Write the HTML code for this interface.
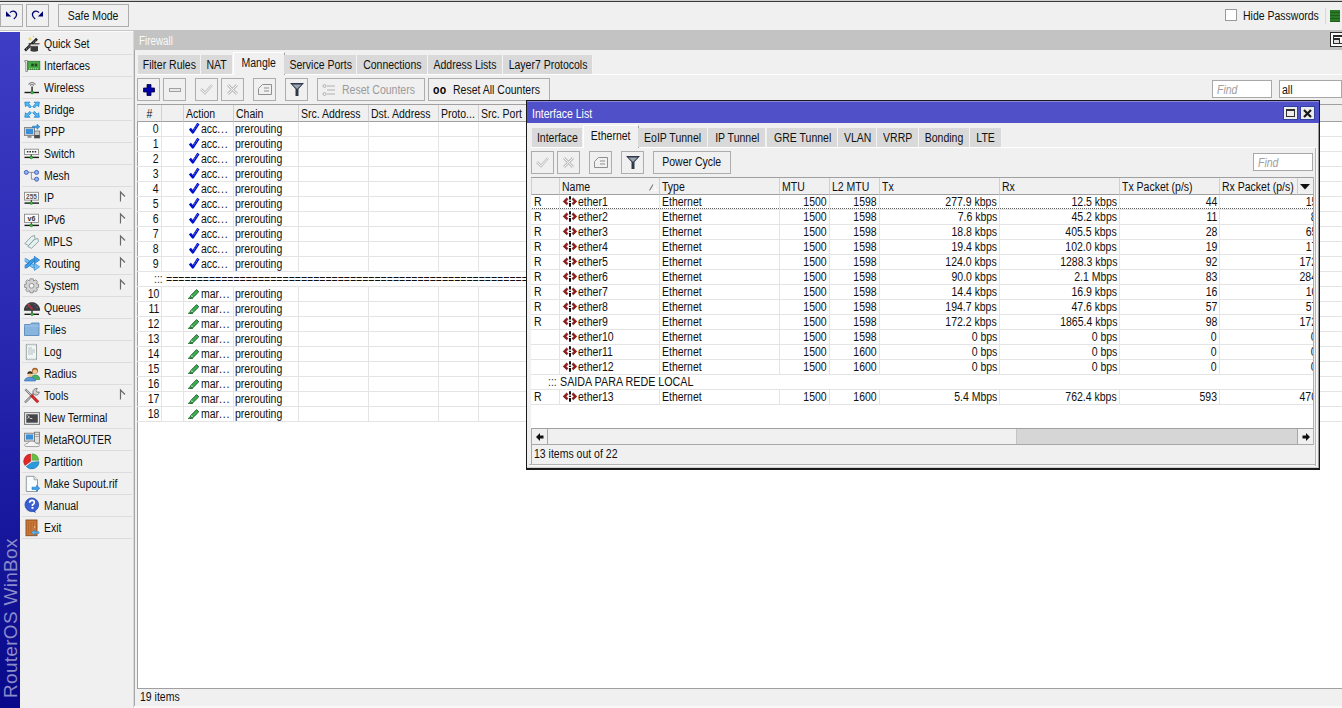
<!DOCTYPE html><html><head><meta charset="utf-8"><style>
*{margin:0;padding:0;box-sizing:border-box}
html,body{width:1342px;height:708px;overflow:hidden}
body{background:#f0f0f0;font-family:"Liberation Sans",sans-serif;font-size:12px;color:#000;position:relative}
.sl,.sr,.sc{display:inline-block;transform:scaleX(var(--sx,0.875))}
.sl{transform-origin:0 50%}.sr{transform-origin:100% 50%}.sc{transform-origin:50% 50%}
.a{position:absolute}
.t{position:absolute;white-space:nowrap}
.b{position:absolute;border:1px solid #adadad;background:#f0f0f0}
.tab{position:absolute;background:#dcdcdc;border-right:1px solid #f8f8f8}
.hc{position:absolute;border-right:1px solid #c8c8c8;border-bottom:1px solid #a0a0a0;background:#f0f0f0;padding-left:3px;line-height:16px;height:16px}
svg{position:absolute;overflow:visible}
</style></head><body>
<div class="a" style="left:0px;top:0px;width:1342px;height:1px;background:#d0d0d0"></div>
<div class="a" style="left:0px;top:1px;width:1342px;height:1px;background:#3a3a3a"></div>
<div class="a" style="left:0px;top:30px;width:134px;height:1px;background:#c8c8c8"></div>
<div class="a" style="left:0px;top:31px;width:134px;height:1px;background:#fafafa"></div>
<div class="b" style="left:0px;top:4px;width:23px;height:23px;"></div>
<div class="b" style="left:26px;top:4px;width:23px;height:23px;"></div>
<div class="b" style="left:58px;top:4px;width:71px;height:23px;"></div>
<div class="t" style="left:58px;top:6px;height:21px;line-height:21px;width:71px;text-align:center;color:#111"><span class="sc">Safe Mode</span></div>
<svg style="left:6px;top:10px" width="12" height="10"><path d="M4 2.6 Q5.5 1 7.5 1.2 Q10.6 1.8 10.6 4.8 Q10.4 7.2 7.8 9" stroke="#000070" stroke-width="1.3" fill="none"/><path d="M0 1.2 L5.2 6.6 H0 Z" fill="#000070"/></svg>
<svg style="left:31px;top:10px" width="12" height="10"><path d="M8 2.6 Q6.5 1 4.5 1.2 Q1.4 1.8 1.4 4.8 Q1.6 7.2 4.2 9" stroke="#000070" stroke-width="1.3" fill="none"/><path d="M12 1.2 L6.8 6.6 H12 Z" fill="#000070"/></svg>
<div class="a" style="left:1225px;top:9px;width:12px;height:12px;background:#fff;border:1px solid #9a9a9a"></div>
<div class="t" style="left:1243px;top:9px;height:15px;line-height:15px;color:#111"><span class="sl">Hide Passwords</span></div>
<div class="a" style="left:1325px;top:8px;width:1px;height:16px;background:#d8d8d8"></div>
<div class="a" style="left:1330px;top:10px;width:10px;height:12px;background:repeating-linear-gradient(#2a7a2a 0 2px,#1c601c 2px 3px)"></div>
<div class="a" style="left:0px;top:32px;width:20px;height:676px;background:linear-gradient(#3d3dc6,#2a2ab4 40%,#08088a)"></div>
<div class="t" style="left:1px;top:698px;transform-origin:0 0;transform:rotate(-90deg);font-size:19px;letter-spacing:0.3px;color:#8c8cc8;line-height:19px">RouterOS WinBox</div>
<div class="t" style="left:44px;top:36px;height:16px;line-height:16px;color:#111"><span class="sl">Quick Set</span></div>
<div class="a" style="left:22px;top:54px;width:110px;height:1px;background:#dcdcdc"></div>
<svg style="left:24px;top:32px" width="16" height="22" viewBox="0 0 16 22"><path d="M1 18.5 L13 6.8" stroke="#1a1a1a" stroke-width="2.6"/><path d="M2 17.5 L12 7.8" stroke="#e8e8e8" stroke-width="0.8" stroke-dasharray="1.2 1.2"/>
<path d="M6.5 12 H14 V19 Q10.2 20.3 6.5 19 Z" fill="#3a3a3a"/><rect x="6.5" y="12" width="7.5" height="2.2" fill="#d8d8d8"/><path d="M4.5 11.8 H15.5" stroke="#202020" stroke-width="1"/>
<path d="M6 4.5 L6.6 6.4 L8.5 7 L6.6 7.6 L6 9.5 L5.4 7.6 L3.5 7 L5.4 6.4 Z" fill="#e8d040"/><circle cx="9.5" cy="4.5" r="0.7" fill="#d0c050"/><circle cx="12" cy="9.5" r="0.6" fill="#c0c060"/></svg>
<div class="t" style="left:44px;top:58px;height:16px;line-height:16px;color:#111"><span class="sl">Interfaces</span></div>
<div class="a" style="left:22px;top:76px;width:110px;height:1px;background:#dcdcdc"></div>
<svg style="left:24px;top:54px" width="16" height="22" viewBox="0 0 16 22"><path d="M0.8 6.5 H3.5 V17.5 H1.8 V8 H0.8 Z" fill="#f0f0f0" stroke="#8a8a8a" stroke-width="0.9"/>
<rect x="3.8" y="7.3" width="12" height="8.3" fill="#4caa4c" stroke="#2a7a2a" stroke-width="0.8"/><rect x="7.2" y="9.6" width="2.6" height="2.8" fill="#1e4a1e"/><rect x="10.7" y="9.6" width="2.6" height="2.8" fill="#1e4a1e"/>
<path d="M5 14.8 H15" stroke="#d8e070" stroke-width="1" stroke-dasharray="1 1"/></svg>
<div class="t" style="left:44px;top:80px;height:16px;line-height:16px;color:#111"><span class="sl">Wireless</span></div>
<div class="a" style="left:22px;top:98px;width:110px;height:1px;background:#dcdcdc"></div>
<svg style="left:24px;top:76px" width="16" height="22" viewBox="0 0 16 22"><path d="M4.5 8.5 Q8 4.5 11.5 8.5" stroke="#7a7a7a" stroke-width="1.1" fill="none"/><path d="M6 9.5 Q8 7.5 10 9.5" stroke="#7a7a7a" stroke-width="1.1" fill="none"/>
<rect x="7.2" y="10.5" width="1.8" height="6" fill="#505050"/><path d="M0.5 16.5 H15" stroke="#1a1a1a" stroke-width="1.4"/><circle cx="8.1" cy="16.5" r="1.4" fill="#3cc040" stroke="#1a6a1a" stroke-width="0.5"/></svg>
<div class="t" style="left:44px;top:102px;height:16px;line-height:16px;color:#111"><span class="sl">Bridge</span></div>
<div class="a" style="left:22px;top:120px;width:110px;height:1px;background:#dcdcdc"></div>
<svg style="left:24px;top:98px" width="16" height="22" viewBox="0 0 16 22"><g fill="#55b8f0" stroke="#1a80d0" stroke-width="0.8"><path d="M0.8 4.2 H6 L4.5 5.7 L7.3 8.5 L5.8 10 L3 7.2 L1.5 8.7 Z"/><path d="M15.3 4.2 H10.1 L11.6 5.7 L8.8 8.5 L10.3 10 L13.1 7.2 L14.6 8.7 Z"/>
<path d="M0.8 19.2 H6 L4.5 17.7 L7.3 14.9 L5.8 13.4 L3 16.2 L1.5 14.7 Z"/><path d="M15.3 19.2 H10.1 L11.6 17.7 L8.8 14.9 L10.3 13.4 L13.1 16.2 L14.6 14.7 Z"/></g></svg>
<div class="t" style="left:44px;top:124px;height:16px;line-height:16px;color:#111"><span class="sl">PPP</span></div>
<div class="a" style="left:22px;top:142px;width:110px;height:1px;background:#dcdcdc"></div>
<svg style="left:24px;top:120px" width="16" height="22" viewBox="0 0 16 22"><rect x="0.5" y="7.5" width="10" height="8" fill="#d0d0d0" stroke="#808080" stroke-width="0.9"/><rect x="2" y="8.8" width="7" height="5.3" fill="#3a90d8"/><rect x="3.5" y="16" width="4" height="1.8" fill="#909090"/>
<rect x="10.5" y="11" width="5.2" height="7" fill="#c8c8c8" stroke="#707070" stroke-width="0.8"/><rect x="10.5" y="15" width="5.2" height="3" fill="#4a4a4a"/>
<path d="M8.5 6.2 H13 V4.3 L15.8 6.8 L13 9.3 V7.6 H8.5 Z" fill="#3aa0e8" stroke="#1a70c0" stroke-width="0.6"/></svg>
<div class="t" style="left:44px;top:146px;height:16px;line-height:16px;color:#111"><span class="sl">Switch</span></div>
<div class="a" style="left:22px;top:164px;width:110px;height:1px;background:#dcdcdc"></div>
<svg style="left:24px;top:142px" width="16" height="22" viewBox="0 0 16 22"><rect x="0.5" y="7.2" width="14" height="5.4" fill="#fafafa" stroke="#8a8a8a" stroke-width="0.9"/><path d="M2.8 9.8 H12.5" stroke="#303030" stroke-width="1.5" stroke-dasharray="1.6 1"/><rect x="6.7" y="12.6" width="1.2" height="2.4" fill="#303030"/><path d="M0.5 15.4 H15" stroke="#1a1a1a" stroke-width="1.4"/><circle cx="7.3" cy="15.4" r="1.4" fill="#3cc040" stroke="#1a6a1a" stroke-width="0.5"/></svg>
<div class="t" style="left:44px;top:168px;height:16px;line-height:16px;color:#111"><span class="sl">Mesh</span></div>
<div class="a" style="left:22px;top:186px;width:110px;height:1px;background:#dcdcdc"></div>
<svg style="left:24px;top:164px" width="16" height="22" viewBox="0 0 16 22"><path d="M2.2 8.4 H12.5 M7.4 8.4 V15.2 H12.5" stroke="#8a8a8a" stroke-width="0.9" fill="none"/>
<g fill="#90b4f4" stroke="#3a5ab8" stroke-width="0.9"><circle cx="2.3" cy="8.4" r="2"/><circle cx="12.6" cy="8.4" r="2"/><circle cx="12.6" cy="15.2" r="2"/></g></svg>
<div class="t" style="left:44px;top:190px;height:16px;line-height:16px;color:#111"><span class="sl">IP</span></div>
<div class="a" style="left:22px;top:208px;width:110px;height:1px;background:#dcdcdc"></div>
<svg style="left:24px;top:186px" width="16" height="22" viewBox="0 0 16 22"><rect x="0.5" y="6.3" width="14" height="7.8" fill="#fafafa" stroke="#8a8a8a" stroke-width="0.9"/><text x="7.5" y="12.8" font-size="6.5" font-family="Liberation Sans" font-weight="bold" fill="#555" text-anchor="middle" letter-spacing="0">255</text><rect x="6.8" y="14" width="1" height="3" fill="#303030"/><path d="M0.5 17.1 H15" stroke="#1a1a1a" stroke-width="1.4"/><circle cx="7.3" cy="17.1" r="1.4" fill="#3cc040" stroke="#1a6a1a" stroke-width="0.5"/></svg>
<svg style="left:119px;top:191px" width="8" height="12"><path d="M1.5 1 L6 5.8 L1.5 10.5" stroke="#ffffff" stroke-width="1" fill="none"/><path d="M1.5 10.5 V1 L6 5.5" stroke="#6a6a6a" stroke-width="1.2" fill="none"/></svg>
<div class="t" style="left:44px;top:212px;height:16px;line-height:16px;color:#111"><span class="sl">IPv6</span></div>
<div class="a" style="left:22px;top:230px;width:110px;height:1px;background:#dcdcdc"></div>
<svg style="left:24px;top:208px" width="16" height="22" viewBox="0 0 16 22"><rect x="0.5" y="6.2" width="14" height="8.2" fill="#fafafa" stroke="#8a8a8a" stroke-width="0.9"/><text x="7.5" y="12.9" font-size="7" font-family="Liberation Sans" font-weight="bold" fill="#333" text-anchor="middle" letter-spacing="0">v6</text><rect x="6.8" y="14.4" width="1" height="3" fill="#303030"/><path d="M0.5 17.4 H15" stroke="#1a1a1a" stroke-width="1.4"/><circle cx="7.3" cy="17.4" r="1.4" fill="#3cc040" stroke="#1a6a1a" stroke-width="0.5"/></svg>
<svg style="left:119px;top:213px" width="8" height="12"><path d="M1.5 1 L6 5.8 L1.5 10.5" stroke="#ffffff" stroke-width="1" fill="none"/><path d="M1.5 10.5 V1 L6 5.5" stroke="#6a6a6a" stroke-width="1.2" fill="none"/></svg>
<div class="t" style="left:44px;top:234px;height:16px;line-height:16px;color:#111"><span class="sl">MPLS</span></div>
<div class="a" style="left:22px;top:252px;width:110px;height:1px;background:#dcdcdc"></div>
<svg style="left:24px;top:230px" width="16" height="22" viewBox="0 0 16 22"><g fill="#e4f2f2" stroke="#8a9a9a" stroke-width="0.9"><path d="M0.8 13.5 L7.5 6.5 L10.5 5.5 L11 8.5 L4.5 15.5 Z"/><path d="M3.8 16.5 L10.5 9.5 L13.8 8.5 L14.5 11.5 L7.5 18.3 Z"/></g></svg>
<svg style="left:119px;top:235px" width="8" height="12"><path d="M1.5 1 L6 5.8 L1.5 10.5" stroke="#ffffff" stroke-width="1" fill="none"/><path d="M1.5 10.5 V1 L6 5.5" stroke="#6a6a6a" stroke-width="1.2" fill="none"/></svg>
<div class="t" style="left:44px;top:256px;height:16px;line-height:16px;color:#111"><span class="sl">Routing</span></div>
<div class="a" style="left:22px;top:274px;width:110px;height:1px;background:#dcdcdc"></div>
<svg style="left:24px;top:252px" width="16" height="22" viewBox="0 0 16 22"><path d="M0.8 8 C5 8 6.5 14.8 10.8 14.8" stroke="#2a7ac8" stroke-width="3.6" fill="none"/><path d="M0.8 8 C5 8 6.5 14.8 10.8 14.8" stroke="#74c4f4" stroke-width="2.4" fill="none"/><path d="M10.3 11.2 L15.6 14.8 L10.3 18.5 Z" fill="#74c4f4" stroke="#2a7ac8" stroke-width="0.6"/>
<path d="M0.8 14.8 C5 14.8 6.5 8 10.8 8" stroke="#1a6ab8" stroke-width="3.6" fill="none"/><path d="M0.8 14.8 C5 14.8 6.5 8 10.8 8" stroke="#3a9ee8" stroke-width="2.4" fill="none"/><path d="M10.3 4.3 L15.6 8 L10.3 11.7 Z" fill="#3a9ee8" stroke="#1a6ab8" stroke-width="0.6"/></svg>
<svg style="left:119px;top:257px" width="8" height="12"><path d="M1.5 1 L6 5.8 L1.5 10.5" stroke="#ffffff" stroke-width="1" fill="none"/><path d="M1.5 10.5 V1 L6 5.5" stroke="#6a6a6a" stroke-width="1.2" fill="none"/></svg>
<div class="t" style="left:44px;top:278px;height:16px;line-height:16px;color:#111"><span class="sl">System</span></div>
<div class="a" style="left:22px;top:296px;width:110px;height:1px;background:#dcdcdc"></div>
<svg style="left:24px;top:274px" width="16" height="22" viewBox="0 0 16 22"><g transform="translate(7.6 11.8)"><path d="M-1.5 -7 H1.5 L2 -4.8 L4.3 -5.9 L5.9 -4.3 L4.8 -2 L7 -1.5 V1.5 L4.8 2 L5.9 4.3 L4.3 5.9 L2 4.8 L1.5 7 H-1.5 L-2 4.8 L-4.3 5.9 L-5.9 4.3 L-4.8 2 L-7 1.5 V-1.5 L-4.8 -2 L-5.9 -4.3 L-4.3 -5.9 L-2 -4.8 Z" fill="#d4d4d4" stroke="#8a8a8a" stroke-width="0.9"/><circle r="2.4" fill="#f4f4f4" stroke="#8a8a8a" stroke-width="0.9"/></g></svg>
<svg style="left:119px;top:279px" width="8" height="12"><path d="M1.5 1 L6 5.8 L1.5 10.5" stroke="#ffffff" stroke-width="1" fill="none"/><path d="M1.5 10.5 V1 L6 5.5" stroke="#6a6a6a" stroke-width="1.2" fill="none"/></svg>
<div class="t" style="left:44px;top:300px;height:16px;line-height:16px;color:#111"><span class="sl">Queues</span></div>
<div class="a" style="left:22px;top:318px;width:110px;height:1px;background:#dcdcdc"></div>
<svg style="left:24px;top:296px" width="16" height="22" viewBox="0 0 16 22"><path d="M0.3 14.3 A7.7 7.7 0 0 1 15.7 14.3 Z" fill="#3e3e48" stroke="#222" stroke-width="0.8"/><path d="M3.5 8 L8.5 13.5" stroke="#d03030" stroke-width="1.3"/><g fill="#9a9ab0"><circle cx="3" cy="11" r="0.5"/><circle cx="5" cy="8" r="0.5"/><circle cx="8" cy="6.8" r="0.5"/><circle cx="11" cy="8" r="0.5"/><circle cx="13" cy="11" r="0.5"/></g><rect x="7.3" y="14.3" width="1.4" height="3" fill="#303030"/><path d="M0.5 18.3 H15" stroke="#1a1a1a" stroke-width="1.4"/><circle cx="8.1" cy="18.3" r="1.4" fill="#3cc040" stroke="#1a6a1a" stroke-width="0.5"/></svg>
<div class="t" style="left:44px;top:322px;height:16px;line-height:16px;color:#111"><span class="sl">Files</span></div>
<div class="a" style="left:22px;top:340px;width:110px;height:1px;background:#dcdcdc"></div>
<svg style="left:24px;top:318px" width="16" height="22" viewBox="0 0 16 22"><path d="M0.5 6.5 H6 L7.5 5 H15 V17.5 H0.5 Z" fill="#88b4e0" stroke="#5a88b8" stroke-width="0.9"/><path d="M0.5 8 H15" stroke="#a8ccf0" stroke-width="0.8"/></svg>
<div class="t" style="left:44px;top:344px;height:16px;line-height:16px;color:#111"><span class="sl">Log</span></div>
<div class="a" style="left:22px;top:362px;width:110px;height:1px;background:#dcdcdc"></div>
<svg style="left:24px;top:340px" width="16" height="22" viewBox="0 0 16 22"><path d="M2.3 4.2 L3.3 5 L4.3 4.2 L5.3 5 L6.3 4.2 L7.3 5 L8.3 4.2 L9.3 5 L10.3 4.2 L11.3 5 L12.5 4.2 V19.8 L11.3 19 L10.3 19.8 L9.3 19 L8.3 19.8 L7.3 19 L6.3 19.8 L5.3 19 L4.3 19.8 L3.3 19 L2.3 19.8 Z" fill="#eef6f6" stroke="#8a9090" stroke-width="0.8"/><path d="M4 8 H8 M4 10 H11 M4 12 H11 M4 14 H9" stroke="#a8b4b4" stroke-width="0.8"/></svg>
<div class="t" style="left:44px;top:366px;height:16px;line-height:16px;color:#111"><span class="sl">Radius</span></div>
<div class="a" style="left:22px;top:384px;width:110px;height:1px;background:#dcdcdc"></div>
<svg style="left:24px;top:362px" width="16" height="22" viewBox="0 0 16 22"><circle cx="11" cy="8.8" r="3" fill="#a86028"/><circle cx="11" cy="9.6" r="2.2" fill="#f0c890"/><path d="M7 17.5 Q7 13 11 13 Q15.8 13 15.8 17.5 Z" fill="#4ab060" stroke="#2a8040" stroke-width="0.6"/>
<circle cx="6" cy="12.5" r="2.6" fill="#f0c890"/><path d="M3.3 12 Q3.5 9.2 6 9.3 Q8.6 9.2 8.7 12 Q6 10.8 3.3 12" fill="#3a2a1a"/><path d="M0.5 19 Q0.8 15.3 6 15.3 Q11.2 15.3 11.5 19 Z" fill="#5a9ad8" stroke="#2a6ab0" stroke-width="0.6"/></svg>
<div class="t" style="left:44px;top:388px;height:16px;line-height:16px;color:#111"><span class="sl">Tools</span></div>
<div class="a" style="left:22px;top:406px;width:110px;height:1px;background:#dcdcdc"></div>
<svg style="left:24px;top:384px" width="16" height="22" viewBox="0 0 16 22"><path d="M1 18.5 L11.8 7.5" stroke="#7a7a7a" stroke-width="2.4"/><path d="M1 18.5 L11.8 7.5" stroke="#d8d8d8" stroke-width="0.9"/><path d="M10 5.5 A3.2 3.2 0 1 0 15.3 8 L13 8.2 L12.2 6.5 L13.3 4.5 A3.2 3.2 0 0 0 10 5.5" fill="#d0d0d0" stroke="#7a7a7a" stroke-width="0.9"/>
<path d="M1.2 5.2 L8 12" stroke="#7a7a7a" stroke-width="2.2"/><path d="M1.2 5.2 L8 12" stroke="#d8d8d8" stroke-width="0.8"/><path d="M7 11 L14.2 18.3" stroke="#c02020" stroke-width="3"/><path d="M7.5 11.5 L13.8 17.8" stroke="#f06060" stroke-width="0.9" stroke-dasharray="1 1"/></svg>
<svg style="left:119px;top:389px" width="8" height="12"><path d="M1.5 1 L6 5.8 L1.5 10.5" stroke="#ffffff" stroke-width="1" fill="none"/><path d="M1.5 10.5 V1 L6 5.5" stroke="#6a6a6a" stroke-width="1.2" fill="none"/></svg>
<div class="t" style="left:44px;top:410px;height:16px;line-height:16px;color:#111"><span class="sl">New Terminal</span></div>
<div class="a" style="left:22px;top:428px;width:110px;height:1px;background:#dcdcdc"></div>
<svg style="left:24px;top:406px" width="16" height="22" viewBox="0 0 16 22"><rect x="0.5" y="6.6" width="15" height="11.8" fill="#e8e8e8" stroke="#7a7a7a" stroke-width="1"/><rect x="2.3" y="8.3" width="11.5" height="8.4" fill="#44464a"/><path d="M3.4 9.6 L5.4 11 L3.4 12.4 M5.8 12.5 H8.3" stroke="#f0f0f0" stroke-width="0.8" fill="none"/></svg>
<div class="t" style="left:44px;top:432px;height:16px;line-height:16px;color:#111"><span class="sl">MetaROUTER</span></div>
<div class="a" style="left:22px;top:450px;width:110px;height:1px;background:#dcdcdc"></div>
<svg style="left:24px;top:428px" width="16" height="22" viewBox="0 0 16 22"><rect x="0.5" y="5.2" width="10" height="8" fill="#d8d8d8" stroke="#808080" stroke-width="0.9"/><rect x="2" y="6.5" width="7" height="5" fill="#3a90d8"/><rect x="10.5" y="4.2" width="5" height="11" fill="#e0e0e0" stroke="#707070" stroke-width="0.8"/><path d="M11.2 6.5 H15 M11.2 8.5 H15" stroke="#909090" stroke-width="0.7"/>
<path d="M1.5 18.5 Q0.3 18 1 16.5 Q1.5 15 3.5 15.5 Q4.5 12.8 8 13 Q11 13 12 15.5 Q15.5 15 15.5 17.5 Q15.3 18.6 14 18.6 Z" fill="#f4f4f4" stroke="#909090" stroke-width="0.8"/></svg>
<div class="t" style="left:44px;top:454px;height:16px;line-height:16px;color:#111"><span class="sl">Partition</span></div>
<div class="a" style="left:22px;top:472px;width:110px;height:1px;background:#dcdcdc"></div>
<svg style="left:24px;top:450px" width="16" height="22" viewBox="0 0 16 22"><path d="M6.8 4 V11.2 L1 15.5 A7.3 7.3 0 0 1 6.8 4 Z" fill="#e02828" stroke="#a81818" stroke-width="0.5"/><path d="M8.2 3.8 A7.3 7.3 0 0 1 14.8 10.2 H8.2 Z" fill="#68c040" stroke="#40902a" stroke-width="0.5"/><path d="M15 11.6 A7.3 7.3 0 0 1 2.2 16.5 L8 12.2 Z" fill="#2a9ad8" stroke="#1a6aa8" stroke-width="0.5"/></svg>
<div class="t" style="left:44px;top:476px;height:16px;line-height:16px;color:#111"><span class="sl">Make Supout.rif</span></div>
<div class="a" style="left:22px;top:494px;width:110px;height:1px;background:#dcdcdc"></div>
<svg style="left:24px;top:472px" width="16" height="22" viewBox="0 0 16 22"><path d="M2.3 4.3 H10 L13.5 7.8 V19.5 H2.3 Z" fill="#f8fcfc" stroke="#8a9090" stroke-width="0.9"/><path d="M10 4.3 V7.8 H13.5" fill="#e0e8e8" stroke="#8a9090" stroke-width="0.7"/>
<path d="M8 15.2 H12.5 V13.3 L15.8 16.3 L12.5 19.3 V17.4 H8 Z" fill="#3aa4ec" stroke="#1a74c4" stroke-width="0.6"/></svg>
<div class="t" style="left:44px;top:498px;height:16px;line-height:16px;color:#111"><span class="sl">Manual</span></div>
<div class="a" style="left:22px;top:516px;width:110px;height:1px;background:#dcdcdc"></div>
<svg style="left:24px;top:494px" width="16" height="22" viewBox="0 0 16 22"><path d="M11 16.5 L11.8 19 L9 17.4 Z" fill="#2a4ab8"/><circle cx="7.8" cy="10.8" r="6.8" fill="#3a5ed0" stroke="#2040a8" stroke-width="0.8"/><path d="M5.6 8.8 Q5.8 6.3 8 6.3 Q10.5 6.3 10.3 8.7 Q10.2 10 8.5 10.8 V12" stroke="#fff" stroke-width="1.7" fill="none"/><rect x="7.5" y="13" width="2" height="1.8" fill="#fff"/></svg>
<div class="t" style="left:44px;top:520px;height:16px;line-height:16px;color:#111"><span class="sl">Exit</span></div>
<div class="a" style="left:22px;top:538px;width:110px;height:1px;background:#dcdcdc"></div>
<svg style="left:24px;top:516px" width="16" height="22" viewBox="0 0 16 22"><rect x="2" y="4" width="11" height="15.7" fill="#c87838" stroke="#8a4818" stroke-width="0.9"/><path d="M4.5 6 V18 M7 6 V18 M9.5 6 V12" stroke="#a85a20" stroke-width="0.6"/><circle cx="10.5" cy="11" r="0.7" fill="#f8e0a0"/>
<path d="M15 15.8 H10.5 V14 L7.5 16.6 L10.5 19.2 V17.4 H15 Z" fill="#6ab8f0" stroke="#2a80c8" stroke-width="0.6"/></svg>
<div class="a" style="left:133px;top:31px;width:1px;height:677px;background:#d8d8d8"></div>
<div class="a" style="left:134px;top:30px;width:1208px;height:20px;background:#c3c3c3"></div>
<div class="t" style="left:139px;top:33px;height:17px;line-height:17px;color:#fafafa;--sx:0.82"><span class="sl">Firewall</span></div>
<div class="a" style="left:1330px;top:32px;width:13px;height:15px;background:#fafafa;border:1px solid #2a2a2a"></div>
<div class="a" style="left:1333px;top:35px;width:10px;height:9px;background:#fafafa;border:1px solid #2a2a2a;border-top-width:2px"></div>
<div class="a" style="left:1333px;top:38px;width:7px;height:6px;background:#e0e0e0;border:1px solid #2a2a2a;border-top-width:2px"></div>
<div class="a" style="left:134px;top:50px;width:1208px;height:658px;background:#f0f0f0;border-left:1px solid #a8a8a8"></div>
<div class="a" style="left:137px;top:74px;width:1205px;height:1px;background:#ffffff"></div>
<div class="a" style="left:138px;top:55px;width:63px;height:19px;background:#d9d9d9;border-right:1px solid #f4f4f4"></div>
<div class="t" style="left:138px;top:57px;height:16px;line-height:16px;width:63px;text-align:center;color:#111"><span class="sc">Filter Rules</span></div>
<div class="a" style="left:201px;top:55px;width:32px;height:19px;background:#d9d9d9;border-right:1px solid #f4f4f4"></div>
<div class="t" style="left:201px;top:57px;height:16px;line-height:16px;width:32px;text-align:center;color:#111"><span class="sc">NAT</span></div>
<div class="a" style="left:233px;top:52px;width:52px;height:23px;background:#f0f0f0;border-left:1px solid #ffffff;border-top:1px solid #ffffff;border-right:1px solid #a0a0a0"></div>
<div class="t" style="left:233px;top:55px;height:16px;line-height:16px;width:51px;text-align:center;color:#111"><span class="sc">Mangle</span></div>
<div class="a" style="left:284px;top:55px;width:73px;height:19px;background:#d9d9d9;border-right:1px solid #f4f4f4"></div>
<div class="t" style="left:284px;top:57px;height:16px;line-height:16px;width:73px;text-align:center;color:#111"><span class="sc">Service Ports</span></div>
<div class="a" style="left:357px;top:55px;width:71px;height:19px;background:#d9d9d9;border-right:1px solid #f4f4f4"></div>
<div class="t" style="left:357px;top:57px;height:16px;line-height:16px;width:71px;text-align:center;color:#111"><span class="sc">Connections</span></div>
<div class="a" style="left:428px;top:55px;width:75px;height:19px;background:#d9d9d9;border-right:1px solid #f4f4f4"></div>
<div class="t" style="left:428px;top:57px;height:16px;line-height:16px;width:75px;text-align:center;color:#111"><span class="sc">Address Lists</span></div>
<div class="a" style="left:503px;top:55px;width:90px;height:19px;background:#d9d9d9;border-right:1px solid #f4f4f4"></div>
<div class="t" style="left:503px;top:57px;height:16px;line-height:16px;width:90px;text-align:center;color:#111"><span class="sc">Layer7 Protocols</span></div>
<div class="b" style="left:137px;top:78px;width:23px;height:23px;"></div>
<div class="b" style="left:163px;top:78px;width:23px;height:23px;"></div>
<div class="b" style="left:195px;top:78px;width:23px;height:23px;"></div>
<div class="b" style="left:221px;top:78px;width:23px;height:23px;"></div>
<div class="b" style="left:253px;top:78px;width:23px;height:23px;"></div>
<div class="b" style="left:285px;top:78px;width:23px;height:23px;"></div>
<div class="b" style="left:317px;top:78px;width:108px;height:23px;"></div>
<div class="b" style="left:428px;top:78px;width:122px;height:23px;"></div>
<svg style="left:142px;top:83px" width="14" height="14"><path d="M5 1.5 H9 V5 H12.5 V9 H9 V12.5 H5 V9 H1.5 V5 H5 Z" fill="#0000a8" stroke="#000040" stroke-width="0.8"/></svg>
<div class="a" style="left:169px;top:88px;width:12px;height:4px;background:#e8e8e8;border:1px solid #a0a0a0"></div>
<svg style="left:199px;top:82px" width="16" height="14"><path d="M2 7 L6 11 L13 3" stroke="#c0c0c0" stroke-width="2.5" fill="none"/><path d="M2 7 L6 11 L13 3" stroke="#f4f4f4" stroke-width="1" fill="none"/></svg>
<svg style="left:226px;top:83px" width="14" height="14"><path d="M2 2 L11 11 M11 2 L2 11" stroke="#c0c0c0" stroke-width="3" fill="none"/><path d="M2 2 L11 11 M11 2 L2 11" stroke="#f4f4f4" stroke-width="1" fill="none"/></svg>
<svg style="left:257px;top:83px" width="16" height="14"><path d="M1.5 5.5 L5.5 1.5 L14.5 1.5 L14.5 11.5 L1.5 11.5 Z M7 5 H12 M7 8 H12" stroke="#909090" stroke-width="1" fill="none"/></svg>
<svg style="left:289px;top:82px" width="16" height="15"><path d="M1 1 H15 L9.5 7 V14 H6.5 V7 Z" fill="#303848"/><path d="M3.5 2.5 H12.5 L8 7 Z" fill="#9aa4b4"/></svg>
<svg style="left:322px;top:83px" width="14" height="14"><path d="M5 3 H13 M5 7 H13 M5 11 H13" stroke="#b0b0b0" stroke-width="1" fill="none"/><circle cx="2.5" cy="3" r="1.5" stroke="#b0b0b0" fill="none"/><circle cx="2.5" cy="11" r="1.5" stroke="#b0b0b0" fill="none"/></svg>
<div class="t" style="left:342px;top:83px;height:15px;line-height:15px;color:#9a9a9a"><span class="sl">Reset Counters</span></div>
<div class="t" style="left:433px;top:83px;height:15px;line-height:15px;color:#000"><span class="sl"><b style='letter-spacing:0.3px;font-size:12px'>oo</b></span></div>
<div class="t" style="left:453px;top:83px;height:15px;line-height:15px;color:#111"><span class="sl">Reset All Counters</span></div>
<div class="a" style="left:1212px;top:80px;width:60px;height:18px;background:#fff;border:1px solid #a8a8a8"></div>
<div class="t" style="left:1217px;top:82px;height:16px;line-height:16px;color:#a0a0a0;font-style:italic"><span class="sl">Find</span></div>
<div class="a" style="left:1279px;top:80px;width:63px;height:18px;background:#fff;border:1px solid #a8a8a8"></div>
<div class="t" style="left:1282px;top:82px;height:16px;line-height:16px;color:#111"><span class="sl">all</span></div>
<div class="a" style="left:137px;top:104px;width:1205px;height:584px;background:#fff;border-top:1px solid #a0a0a0;border-left:1px solid #a0a0a0"></div>
<div class="a" style="left:137px;top:105px;width:24px;height:17px;background:#f0f0f0;border-left:1px solid #d0d0d0;border-bottom:1px solid #a0a0a0"></div>
<div class="t" style="left:137px;top:106px;height:16px;line-height:16px;color:#111;width:24px;text-align:center"><span class="sc">#</span></div>
<div class="a" style="left:161px;top:105px;width:22px;height:17px;background:#f0f0f0;border-left:1px solid #d0d0d0;border-bottom:1px solid #a0a0a0"></div>
<div class="a" style="left:183px;top:105px;width:50px;height:17px;background:#f0f0f0;border-left:1px solid #d0d0d0;border-bottom:1px solid #a0a0a0"></div>
<div class="t" style="left:186px;top:106px;height:16px;line-height:16px;color:#111"><span class="sl">Action</span></div>
<div class="a" style="left:233px;top:105px;width:65px;height:17px;background:#f0f0f0;border-left:1px solid #d0d0d0;border-bottom:1px solid #a0a0a0"></div>
<div class="t" style="left:236px;top:106px;height:16px;line-height:16px;color:#111"><span class="sl">Chain</span></div>
<div class="a" style="left:298px;top:105px;width:70px;height:17px;background:#f0f0f0;border-left:1px solid #d0d0d0;border-bottom:1px solid #a0a0a0"></div>
<div class="t" style="left:301px;top:106px;height:16px;line-height:16px;color:#111"><span class="sl">Src. Address</span></div>
<div class="a" style="left:368px;top:105px;width:70px;height:17px;background:#f0f0f0;border-left:1px solid #d0d0d0;border-bottom:1px solid #a0a0a0"></div>
<div class="t" style="left:371px;top:106px;height:16px;line-height:16px;color:#111"><span class="sl">Dst. Address</span></div>
<div class="a" style="left:438px;top:105px;width:40px;height:17px;background:#f0f0f0;border-left:1px solid #d0d0d0;border-bottom:1px solid #a0a0a0"></div>
<div class="t" style="left:441px;top:106px;height:16px;line-height:16px;color:#111"><span class="sl">Proto...</span></div>
<div class="a" style="left:478px;top:105px;width:70px;height:17px;background:#f0f0f0;border-left:1px solid #d0d0d0;border-bottom:1px solid #a0a0a0"></div>
<div class="t" style="left:481px;top:106px;height:16px;line-height:16px;color:#111"><span class="sl">Src. Port</span></div>
<div class="a" style="left:548px;top:105px;width:70px;height:17px;background:#f0f0f0;border-left:1px solid #d0d0d0;border-bottom:1px solid #a0a0a0"></div>
<div class="t" style="left:551px;top:106px;height:16px;line-height:16px;color:#111"><span class="sl">Dst. Port</span></div>
<div class="a" style="left:618px;top:105px;width:724px;height:17px;background:#f0f0f0;border-left:1px solid #d0d0d0;border-bottom:1px solid #a0a0a0"></div>
<div class="a" style="left:137px;top:136px;width:1205px;height:1px;background:#e4e4e4"></div>
<div class="a" style="left:161px;top:122px;width:1px;height:14px;background:#e4e4e4"></div>
<div class="a" style="left:183px;top:122px;width:1px;height:14px;background:#e4e4e4"></div>
<div class="a" style="left:233px;top:122px;width:1px;height:14px;background:#e4e4e4"></div>
<div class="a" style="left:298px;top:122px;width:1px;height:14px;background:#e4e4e4"></div>
<div class="a" style="left:368px;top:122px;width:1px;height:14px;background:#e4e4e4"></div>
<div class="a" style="left:438px;top:122px;width:1px;height:14px;background:#e4e4e4"></div>
<div class="a" style="left:478px;top:122px;width:1px;height:14px;background:#e4e4e4"></div>
<div class="a" style="left:548px;top:122px;width:1px;height:14px;background:#e4e4e4"></div>
<div class="a" style="left:618px;top:122px;width:1px;height:14px;background:#e4e4e4"></div>
<div class="t" style="right:1183px;top:122px;height:15px;line-height:15px;color:#111"><span class="sr">0</span></div>
<svg style="left:189px;top:122px" width="12" height="12"><path d="M0.9 6.6 L3.8 10.2 L9.4 1.6" stroke="#0010c8" stroke-width="2.7" fill="none" stroke-linejoin="round"/><path d="M4.6 8.4 L8.6 2.4" stroke="#c8d0ff" stroke-width="0.7" stroke-dasharray="1 1" fill="none"/></svg>
<div class="t" style="left:201px;top:122px;height:15px;line-height:15px;color:#111"><span class="sl">acc<span style='letter-spacing:0.9px'>...</span></span></div>
<div class="t" style="left:235px;top:122px;height:15px;line-height:15px;color:#111"><span class="sl">prerouting</span></div>
<div class="a" style="left:137px;top:151px;width:1205px;height:1px;background:#e4e4e4"></div>
<div class="a" style="left:161px;top:137px;width:1px;height:14px;background:#e4e4e4"></div>
<div class="a" style="left:183px;top:137px;width:1px;height:14px;background:#e4e4e4"></div>
<div class="a" style="left:233px;top:137px;width:1px;height:14px;background:#e4e4e4"></div>
<div class="a" style="left:298px;top:137px;width:1px;height:14px;background:#e4e4e4"></div>
<div class="a" style="left:368px;top:137px;width:1px;height:14px;background:#e4e4e4"></div>
<div class="a" style="left:438px;top:137px;width:1px;height:14px;background:#e4e4e4"></div>
<div class="a" style="left:478px;top:137px;width:1px;height:14px;background:#e4e4e4"></div>
<div class="a" style="left:548px;top:137px;width:1px;height:14px;background:#e4e4e4"></div>
<div class="a" style="left:618px;top:137px;width:1px;height:14px;background:#e4e4e4"></div>
<div class="t" style="right:1183px;top:137px;height:15px;line-height:15px;color:#111"><span class="sr">1</span></div>
<svg style="left:189px;top:137px" width="12" height="12"><path d="M0.9 6.6 L3.8 10.2 L9.4 1.6" stroke="#0010c8" stroke-width="2.7" fill="none" stroke-linejoin="round"/><path d="M4.6 8.4 L8.6 2.4" stroke="#c8d0ff" stroke-width="0.7" stroke-dasharray="1 1" fill="none"/></svg>
<div class="t" style="left:201px;top:137px;height:15px;line-height:15px;color:#111"><span class="sl">acc<span style='letter-spacing:0.9px'>...</span></span></div>
<div class="t" style="left:235px;top:137px;height:15px;line-height:15px;color:#111"><span class="sl">prerouting</span></div>
<div class="a" style="left:137px;top:166px;width:1205px;height:1px;background:#e4e4e4"></div>
<div class="a" style="left:161px;top:152px;width:1px;height:14px;background:#e4e4e4"></div>
<div class="a" style="left:183px;top:152px;width:1px;height:14px;background:#e4e4e4"></div>
<div class="a" style="left:233px;top:152px;width:1px;height:14px;background:#e4e4e4"></div>
<div class="a" style="left:298px;top:152px;width:1px;height:14px;background:#e4e4e4"></div>
<div class="a" style="left:368px;top:152px;width:1px;height:14px;background:#e4e4e4"></div>
<div class="a" style="left:438px;top:152px;width:1px;height:14px;background:#e4e4e4"></div>
<div class="a" style="left:478px;top:152px;width:1px;height:14px;background:#e4e4e4"></div>
<div class="a" style="left:548px;top:152px;width:1px;height:14px;background:#e4e4e4"></div>
<div class="a" style="left:618px;top:152px;width:1px;height:14px;background:#e4e4e4"></div>
<div class="t" style="right:1183px;top:152px;height:15px;line-height:15px;color:#111"><span class="sr">2</span></div>
<svg style="left:189px;top:152px" width="12" height="12"><path d="M0.9 6.6 L3.8 10.2 L9.4 1.6" stroke="#0010c8" stroke-width="2.7" fill="none" stroke-linejoin="round"/><path d="M4.6 8.4 L8.6 2.4" stroke="#c8d0ff" stroke-width="0.7" stroke-dasharray="1 1" fill="none"/></svg>
<div class="t" style="left:201px;top:152px;height:15px;line-height:15px;color:#111"><span class="sl">acc<span style='letter-spacing:0.9px'>...</span></span></div>
<div class="t" style="left:235px;top:152px;height:15px;line-height:15px;color:#111"><span class="sl">prerouting</span></div>
<div class="a" style="left:137px;top:181px;width:1205px;height:1px;background:#e4e4e4"></div>
<div class="a" style="left:161px;top:167px;width:1px;height:14px;background:#e4e4e4"></div>
<div class="a" style="left:183px;top:167px;width:1px;height:14px;background:#e4e4e4"></div>
<div class="a" style="left:233px;top:167px;width:1px;height:14px;background:#e4e4e4"></div>
<div class="a" style="left:298px;top:167px;width:1px;height:14px;background:#e4e4e4"></div>
<div class="a" style="left:368px;top:167px;width:1px;height:14px;background:#e4e4e4"></div>
<div class="a" style="left:438px;top:167px;width:1px;height:14px;background:#e4e4e4"></div>
<div class="a" style="left:478px;top:167px;width:1px;height:14px;background:#e4e4e4"></div>
<div class="a" style="left:548px;top:167px;width:1px;height:14px;background:#e4e4e4"></div>
<div class="a" style="left:618px;top:167px;width:1px;height:14px;background:#e4e4e4"></div>
<div class="t" style="right:1183px;top:167px;height:15px;line-height:15px;color:#111"><span class="sr">3</span></div>
<svg style="left:189px;top:167px" width="12" height="12"><path d="M0.9 6.6 L3.8 10.2 L9.4 1.6" stroke="#0010c8" stroke-width="2.7" fill="none" stroke-linejoin="round"/><path d="M4.6 8.4 L8.6 2.4" stroke="#c8d0ff" stroke-width="0.7" stroke-dasharray="1 1" fill="none"/></svg>
<div class="t" style="left:201px;top:167px;height:15px;line-height:15px;color:#111"><span class="sl">acc<span style='letter-spacing:0.9px'>...</span></span></div>
<div class="t" style="left:235px;top:167px;height:15px;line-height:15px;color:#111"><span class="sl">prerouting</span></div>
<div class="a" style="left:137px;top:196px;width:1205px;height:1px;background:#e4e4e4"></div>
<div class="a" style="left:161px;top:182px;width:1px;height:14px;background:#e4e4e4"></div>
<div class="a" style="left:183px;top:182px;width:1px;height:14px;background:#e4e4e4"></div>
<div class="a" style="left:233px;top:182px;width:1px;height:14px;background:#e4e4e4"></div>
<div class="a" style="left:298px;top:182px;width:1px;height:14px;background:#e4e4e4"></div>
<div class="a" style="left:368px;top:182px;width:1px;height:14px;background:#e4e4e4"></div>
<div class="a" style="left:438px;top:182px;width:1px;height:14px;background:#e4e4e4"></div>
<div class="a" style="left:478px;top:182px;width:1px;height:14px;background:#e4e4e4"></div>
<div class="a" style="left:548px;top:182px;width:1px;height:14px;background:#e4e4e4"></div>
<div class="a" style="left:618px;top:182px;width:1px;height:14px;background:#e4e4e4"></div>
<div class="t" style="right:1183px;top:182px;height:15px;line-height:15px;color:#111"><span class="sr">4</span></div>
<svg style="left:189px;top:182px" width="12" height="12"><path d="M0.9 6.6 L3.8 10.2 L9.4 1.6" stroke="#0010c8" stroke-width="2.7" fill="none" stroke-linejoin="round"/><path d="M4.6 8.4 L8.6 2.4" stroke="#c8d0ff" stroke-width="0.7" stroke-dasharray="1 1" fill="none"/></svg>
<div class="t" style="left:201px;top:182px;height:15px;line-height:15px;color:#111"><span class="sl">acc<span style='letter-spacing:0.9px'>...</span></span></div>
<div class="t" style="left:235px;top:182px;height:15px;line-height:15px;color:#111"><span class="sl">prerouting</span></div>
<div class="a" style="left:137px;top:211px;width:1205px;height:1px;background:#e4e4e4"></div>
<div class="a" style="left:161px;top:197px;width:1px;height:14px;background:#e4e4e4"></div>
<div class="a" style="left:183px;top:197px;width:1px;height:14px;background:#e4e4e4"></div>
<div class="a" style="left:233px;top:197px;width:1px;height:14px;background:#e4e4e4"></div>
<div class="a" style="left:298px;top:197px;width:1px;height:14px;background:#e4e4e4"></div>
<div class="a" style="left:368px;top:197px;width:1px;height:14px;background:#e4e4e4"></div>
<div class="a" style="left:438px;top:197px;width:1px;height:14px;background:#e4e4e4"></div>
<div class="a" style="left:478px;top:197px;width:1px;height:14px;background:#e4e4e4"></div>
<div class="a" style="left:548px;top:197px;width:1px;height:14px;background:#e4e4e4"></div>
<div class="a" style="left:618px;top:197px;width:1px;height:14px;background:#e4e4e4"></div>
<div class="t" style="right:1183px;top:197px;height:15px;line-height:15px;color:#111"><span class="sr">5</span></div>
<svg style="left:189px;top:197px" width="12" height="12"><path d="M0.9 6.6 L3.8 10.2 L9.4 1.6" stroke="#0010c8" stroke-width="2.7" fill="none" stroke-linejoin="round"/><path d="M4.6 8.4 L8.6 2.4" stroke="#c8d0ff" stroke-width="0.7" stroke-dasharray="1 1" fill="none"/></svg>
<div class="t" style="left:201px;top:197px;height:15px;line-height:15px;color:#111"><span class="sl">acc<span style='letter-spacing:0.9px'>...</span></span></div>
<div class="t" style="left:235px;top:197px;height:15px;line-height:15px;color:#111"><span class="sl">prerouting</span></div>
<div class="a" style="left:137px;top:226px;width:1205px;height:1px;background:#e4e4e4"></div>
<div class="a" style="left:161px;top:212px;width:1px;height:14px;background:#e4e4e4"></div>
<div class="a" style="left:183px;top:212px;width:1px;height:14px;background:#e4e4e4"></div>
<div class="a" style="left:233px;top:212px;width:1px;height:14px;background:#e4e4e4"></div>
<div class="a" style="left:298px;top:212px;width:1px;height:14px;background:#e4e4e4"></div>
<div class="a" style="left:368px;top:212px;width:1px;height:14px;background:#e4e4e4"></div>
<div class="a" style="left:438px;top:212px;width:1px;height:14px;background:#e4e4e4"></div>
<div class="a" style="left:478px;top:212px;width:1px;height:14px;background:#e4e4e4"></div>
<div class="a" style="left:548px;top:212px;width:1px;height:14px;background:#e4e4e4"></div>
<div class="a" style="left:618px;top:212px;width:1px;height:14px;background:#e4e4e4"></div>
<div class="t" style="right:1183px;top:212px;height:15px;line-height:15px;color:#111"><span class="sr">6</span></div>
<svg style="left:189px;top:212px" width="12" height="12"><path d="M0.9 6.6 L3.8 10.2 L9.4 1.6" stroke="#0010c8" stroke-width="2.7" fill="none" stroke-linejoin="round"/><path d="M4.6 8.4 L8.6 2.4" stroke="#c8d0ff" stroke-width="0.7" stroke-dasharray="1 1" fill="none"/></svg>
<div class="t" style="left:201px;top:212px;height:15px;line-height:15px;color:#111"><span class="sl">acc<span style='letter-spacing:0.9px'>...</span></span></div>
<div class="t" style="left:235px;top:212px;height:15px;line-height:15px;color:#111"><span class="sl">prerouting</span></div>
<div class="a" style="left:137px;top:241px;width:1205px;height:1px;background:#e4e4e4"></div>
<div class="a" style="left:161px;top:227px;width:1px;height:14px;background:#e4e4e4"></div>
<div class="a" style="left:183px;top:227px;width:1px;height:14px;background:#e4e4e4"></div>
<div class="a" style="left:233px;top:227px;width:1px;height:14px;background:#e4e4e4"></div>
<div class="a" style="left:298px;top:227px;width:1px;height:14px;background:#e4e4e4"></div>
<div class="a" style="left:368px;top:227px;width:1px;height:14px;background:#e4e4e4"></div>
<div class="a" style="left:438px;top:227px;width:1px;height:14px;background:#e4e4e4"></div>
<div class="a" style="left:478px;top:227px;width:1px;height:14px;background:#e4e4e4"></div>
<div class="a" style="left:548px;top:227px;width:1px;height:14px;background:#e4e4e4"></div>
<div class="a" style="left:618px;top:227px;width:1px;height:14px;background:#e4e4e4"></div>
<div class="t" style="right:1183px;top:227px;height:15px;line-height:15px;color:#111"><span class="sr">7</span></div>
<svg style="left:189px;top:227px" width="12" height="12"><path d="M0.9 6.6 L3.8 10.2 L9.4 1.6" stroke="#0010c8" stroke-width="2.7" fill="none" stroke-linejoin="round"/><path d="M4.6 8.4 L8.6 2.4" stroke="#c8d0ff" stroke-width="0.7" stroke-dasharray="1 1" fill="none"/></svg>
<div class="t" style="left:201px;top:227px;height:15px;line-height:15px;color:#111"><span class="sl">acc<span style='letter-spacing:0.9px'>...</span></span></div>
<div class="t" style="left:235px;top:227px;height:15px;line-height:15px;color:#111"><span class="sl">prerouting</span></div>
<div class="a" style="left:137px;top:256px;width:1205px;height:1px;background:#e4e4e4"></div>
<div class="a" style="left:161px;top:242px;width:1px;height:14px;background:#e4e4e4"></div>
<div class="a" style="left:183px;top:242px;width:1px;height:14px;background:#e4e4e4"></div>
<div class="a" style="left:233px;top:242px;width:1px;height:14px;background:#e4e4e4"></div>
<div class="a" style="left:298px;top:242px;width:1px;height:14px;background:#e4e4e4"></div>
<div class="a" style="left:368px;top:242px;width:1px;height:14px;background:#e4e4e4"></div>
<div class="a" style="left:438px;top:242px;width:1px;height:14px;background:#e4e4e4"></div>
<div class="a" style="left:478px;top:242px;width:1px;height:14px;background:#e4e4e4"></div>
<div class="a" style="left:548px;top:242px;width:1px;height:14px;background:#e4e4e4"></div>
<div class="a" style="left:618px;top:242px;width:1px;height:14px;background:#e4e4e4"></div>
<div class="t" style="right:1183px;top:242px;height:15px;line-height:15px;color:#111"><span class="sr">8</span></div>
<svg style="left:189px;top:242px" width="12" height="12"><path d="M0.9 6.6 L3.8 10.2 L9.4 1.6" stroke="#0010c8" stroke-width="2.7" fill="none" stroke-linejoin="round"/><path d="M4.6 8.4 L8.6 2.4" stroke="#c8d0ff" stroke-width="0.7" stroke-dasharray="1 1" fill="none"/></svg>
<div class="t" style="left:201px;top:242px;height:15px;line-height:15px;color:#111"><span class="sl">acc<span style='letter-spacing:0.9px'>...</span></span></div>
<div class="t" style="left:235px;top:242px;height:15px;line-height:15px;color:#111"><span class="sl">prerouting</span></div>
<div class="a" style="left:137px;top:271px;width:1205px;height:1px;background:#e4e4e4"></div>
<div class="a" style="left:161px;top:257px;width:1px;height:14px;background:#e4e4e4"></div>
<div class="a" style="left:183px;top:257px;width:1px;height:14px;background:#e4e4e4"></div>
<div class="a" style="left:233px;top:257px;width:1px;height:14px;background:#e4e4e4"></div>
<div class="a" style="left:298px;top:257px;width:1px;height:14px;background:#e4e4e4"></div>
<div class="a" style="left:368px;top:257px;width:1px;height:14px;background:#e4e4e4"></div>
<div class="a" style="left:438px;top:257px;width:1px;height:14px;background:#e4e4e4"></div>
<div class="a" style="left:478px;top:257px;width:1px;height:14px;background:#e4e4e4"></div>
<div class="a" style="left:548px;top:257px;width:1px;height:14px;background:#e4e4e4"></div>
<div class="a" style="left:618px;top:257px;width:1px;height:14px;background:#e4e4e4"></div>
<div class="t" style="right:1183px;top:257px;height:15px;line-height:15px;color:#111"><span class="sr">9</span></div>
<svg style="left:189px;top:257px" width="12" height="12"><path d="M0.9 6.6 L3.8 10.2 L9.4 1.6" stroke="#0010c8" stroke-width="2.7" fill="none" stroke-linejoin="round"/><path d="M4.6 8.4 L8.6 2.4" stroke="#c8d0ff" stroke-width="0.7" stroke-dasharray="1 1" fill="none"/></svg>
<div class="t" style="left:201px;top:257px;height:15px;line-height:15px;color:#111"><span class="sl">acc<span style='letter-spacing:0.9px'>...</span></span></div>
<div class="t" style="left:235px;top:257px;height:15px;line-height:15px;color:#111"><span class="sl">prerouting</span></div>
<div class="a" style="left:137px;top:286px;width:1205px;height:1px;background:#e4e4e4"></div>
<div class="t" style="left:154px;top:272px;height:15px;line-height:15px;color:#333"><span class="sl">:::</span></div>
<div class="t" style="left:166px;top:272px;height:15px;line-height:15px;color:#111"><span class="sl">================================================================================</span></div>
<div class="a" style="left:137px;top:301px;width:1205px;height:1px;background:#e4e4e4"></div>
<div class="a" style="left:161px;top:287px;width:1px;height:14px;background:#e4e4e4"></div>
<div class="a" style="left:183px;top:287px;width:1px;height:14px;background:#e4e4e4"></div>
<div class="a" style="left:233px;top:287px;width:1px;height:14px;background:#e4e4e4"></div>
<div class="a" style="left:298px;top:287px;width:1px;height:14px;background:#e4e4e4"></div>
<div class="a" style="left:368px;top:287px;width:1px;height:14px;background:#e4e4e4"></div>
<div class="a" style="left:438px;top:287px;width:1px;height:14px;background:#e4e4e4"></div>
<div class="a" style="left:478px;top:287px;width:1px;height:14px;background:#e4e4e4"></div>
<div class="a" style="left:548px;top:287px;width:1px;height:14px;background:#e4e4e4"></div>
<div class="a" style="left:618px;top:287px;width:1px;height:14px;background:#e4e4e4"></div>
<div class="t" style="right:1183px;top:287px;height:15px;line-height:15px;color:#111"><span class="sr">10</span></div>
<svg style="left:188px;top:288px" width="12" height="12"><path d="M1.6 9.6 L3 7.2 L8.6 1.6 L10.8 3.8 L5.2 9.4 L2.4 10.4 Z" fill="#38b050" stroke="#0a3010" stroke-width="0.7"/><path d="M3.2 7.6 L4.6 9" stroke="#a0e0b0" stroke-width="1.2"/><path d="M0 10.3 H5" stroke="#1a6a2a" stroke-width="1"/></svg>
<div class="t" style="left:201px;top:287px;height:15px;line-height:15px;color:#111"><span class="sl">mar<span style='letter-spacing:0.9px'>...</span></span></div>
<div class="t" style="left:235px;top:287px;height:15px;line-height:15px;color:#111"><span class="sl">prerouting</span></div>
<div class="a" style="left:137px;top:316px;width:1205px;height:1px;background:#e4e4e4"></div>
<div class="a" style="left:161px;top:302px;width:1px;height:14px;background:#e4e4e4"></div>
<div class="a" style="left:183px;top:302px;width:1px;height:14px;background:#e4e4e4"></div>
<div class="a" style="left:233px;top:302px;width:1px;height:14px;background:#e4e4e4"></div>
<div class="a" style="left:298px;top:302px;width:1px;height:14px;background:#e4e4e4"></div>
<div class="a" style="left:368px;top:302px;width:1px;height:14px;background:#e4e4e4"></div>
<div class="a" style="left:438px;top:302px;width:1px;height:14px;background:#e4e4e4"></div>
<div class="a" style="left:478px;top:302px;width:1px;height:14px;background:#e4e4e4"></div>
<div class="a" style="left:548px;top:302px;width:1px;height:14px;background:#e4e4e4"></div>
<div class="a" style="left:618px;top:302px;width:1px;height:14px;background:#e4e4e4"></div>
<div class="t" style="right:1183px;top:302px;height:15px;line-height:15px;color:#111"><span class="sr">11</span></div>
<svg style="left:188px;top:303px" width="12" height="12"><path d="M1.6 9.6 L3 7.2 L8.6 1.6 L10.8 3.8 L5.2 9.4 L2.4 10.4 Z" fill="#38b050" stroke="#0a3010" stroke-width="0.7"/><path d="M3.2 7.6 L4.6 9" stroke="#a0e0b0" stroke-width="1.2"/><path d="M0 10.3 H5" stroke="#1a6a2a" stroke-width="1"/></svg>
<div class="t" style="left:201px;top:302px;height:15px;line-height:15px;color:#111"><span class="sl">mar<span style='letter-spacing:0.9px'>...</span></span></div>
<div class="t" style="left:235px;top:302px;height:15px;line-height:15px;color:#111"><span class="sl">prerouting</span></div>
<div class="a" style="left:137px;top:331px;width:1205px;height:1px;background:#e4e4e4"></div>
<div class="a" style="left:161px;top:317px;width:1px;height:14px;background:#e4e4e4"></div>
<div class="a" style="left:183px;top:317px;width:1px;height:14px;background:#e4e4e4"></div>
<div class="a" style="left:233px;top:317px;width:1px;height:14px;background:#e4e4e4"></div>
<div class="a" style="left:298px;top:317px;width:1px;height:14px;background:#e4e4e4"></div>
<div class="a" style="left:368px;top:317px;width:1px;height:14px;background:#e4e4e4"></div>
<div class="a" style="left:438px;top:317px;width:1px;height:14px;background:#e4e4e4"></div>
<div class="a" style="left:478px;top:317px;width:1px;height:14px;background:#e4e4e4"></div>
<div class="a" style="left:548px;top:317px;width:1px;height:14px;background:#e4e4e4"></div>
<div class="a" style="left:618px;top:317px;width:1px;height:14px;background:#e4e4e4"></div>
<div class="t" style="right:1183px;top:317px;height:15px;line-height:15px;color:#111"><span class="sr">12</span></div>
<svg style="left:188px;top:318px" width="12" height="12"><path d="M1.6 9.6 L3 7.2 L8.6 1.6 L10.8 3.8 L5.2 9.4 L2.4 10.4 Z" fill="#38b050" stroke="#0a3010" stroke-width="0.7"/><path d="M3.2 7.6 L4.6 9" stroke="#a0e0b0" stroke-width="1.2"/><path d="M0 10.3 H5" stroke="#1a6a2a" stroke-width="1"/></svg>
<div class="t" style="left:201px;top:317px;height:15px;line-height:15px;color:#111"><span class="sl">mar<span style='letter-spacing:0.9px'>...</span></span></div>
<div class="t" style="left:235px;top:317px;height:15px;line-height:15px;color:#111"><span class="sl">prerouting</span></div>
<div class="a" style="left:137px;top:346px;width:1205px;height:1px;background:#e4e4e4"></div>
<div class="a" style="left:161px;top:332px;width:1px;height:14px;background:#e4e4e4"></div>
<div class="a" style="left:183px;top:332px;width:1px;height:14px;background:#e4e4e4"></div>
<div class="a" style="left:233px;top:332px;width:1px;height:14px;background:#e4e4e4"></div>
<div class="a" style="left:298px;top:332px;width:1px;height:14px;background:#e4e4e4"></div>
<div class="a" style="left:368px;top:332px;width:1px;height:14px;background:#e4e4e4"></div>
<div class="a" style="left:438px;top:332px;width:1px;height:14px;background:#e4e4e4"></div>
<div class="a" style="left:478px;top:332px;width:1px;height:14px;background:#e4e4e4"></div>
<div class="a" style="left:548px;top:332px;width:1px;height:14px;background:#e4e4e4"></div>
<div class="a" style="left:618px;top:332px;width:1px;height:14px;background:#e4e4e4"></div>
<div class="t" style="right:1183px;top:332px;height:15px;line-height:15px;color:#111"><span class="sr">13</span></div>
<svg style="left:188px;top:333px" width="12" height="12"><path d="M1.6 9.6 L3 7.2 L8.6 1.6 L10.8 3.8 L5.2 9.4 L2.4 10.4 Z" fill="#38b050" stroke="#0a3010" stroke-width="0.7"/><path d="M3.2 7.6 L4.6 9" stroke="#a0e0b0" stroke-width="1.2"/><path d="M0 10.3 H5" stroke="#1a6a2a" stroke-width="1"/></svg>
<div class="t" style="left:201px;top:332px;height:15px;line-height:15px;color:#111"><span class="sl">mar<span style='letter-spacing:0.9px'>...</span></span></div>
<div class="t" style="left:235px;top:332px;height:15px;line-height:15px;color:#111"><span class="sl">prerouting</span></div>
<div class="a" style="left:137px;top:361px;width:1205px;height:1px;background:#e4e4e4"></div>
<div class="a" style="left:161px;top:347px;width:1px;height:14px;background:#e4e4e4"></div>
<div class="a" style="left:183px;top:347px;width:1px;height:14px;background:#e4e4e4"></div>
<div class="a" style="left:233px;top:347px;width:1px;height:14px;background:#e4e4e4"></div>
<div class="a" style="left:298px;top:347px;width:1px;height:14px;background:#e4e4e4"></div>
<div class="a" style="left:368px;top:347px;width:1px;height:14px;background:#e4e4e4"></div>
<div class="a" style="left:438px;top:347px;width:1px;height:14px;background:#e4e4e4"></div>
<div class="a" style="left:478px;top:347px;width:1px;height:14px;background:#e4e4e4"></div>
<div class="a" style="left:548px;top:347px;width:1px;height:14px;background:#e4e4e4"></div>
<div class="a" style="left:618px;top:347px;width:1px;height:14px;background:#e4e4e4"></div>
<div class="t" style="right:1183px;top:347px;height:15px;line-height:15px;color:#111"><span class="sr">14</span></div>
<svg style="left:188px;top:348px" width="12" height="12"><path d="M1.6 9.6 L3 7.2 L8.6 1.6 L10.8 3.8 L5.2 9.4 L2.4 10.4 Z" fill="#38b050" stroke="#0a3010" stroke-width="0.7"/><path d="M3.2 7.6 L4.6 9" stroke="#a0e0b0" stroke-width="1.2"/><path d="M0 10.3 H5" stroke="#1a6a2a" stroke-width="1"/></svg>
<div class="t" style="left:201px;top:347px;height:15px;line-height:15px;color:#111"><span class="sl">mar<span style='letter-spacing:0.9px'>...</span></span></div>
<div class="t" style="left:235px;top:347px;height:15px;line-height:15px;color:#111"><span class="sl">prerouting</span></div>
<div class="a" style="left:137px;top:376px;width:1205px;height:1px;background:#e4e4e4"></div>
<div class="a" style="left:161px;top:362px;width:1px;height:14px;background:#e4e4e4"></div>
<div class="a" style="left:183px;top:362px;width:1px;height:14px;background:#e4e4e4"></div>
<div class="a" style="left:233px;top:362px;width:1px;height:14px;background:#e4e4e4"></div>
<div class="a" style="left:298px;top:362px;width:1px;height:14px;background:#e4e4e4"></div>
<div class="a" style="left:368px;top:362px;width:1px;height:14px;background:#e4e4e4"></div>
<div class="a" style="left:438px;top:362px;width:1px;height:14px;background:#e4e4e4"></div>
<div class="a" style="left:478px;top:362px;width:1px;height:14px;background:#e4e4e4"></div>
<div class="a" style="left:548px;top:362px;width:1px;height:14px;background:#e4e4e4"></div>
<div class="a" style="left:618px;top:362px;width:1px;height:14px;background:#e4e4e4"></div>
<div class="t" style="right:1183px;top:362px;height:15px;line-height:15px;color:#111"><span class="sr">15</span></div>
<svg style="left:188px;top:363px" width="12" height="12"><path d="M1.6 9.6 L3 7.2 L8.6 1.6 L10.8 3.8 L5.2 9.4 L2.4 10.4 Z" fill="#38b050" stroke="#0a3010" stroke-width="0.7"/><path d="M3.2 7.6 L4.6 9" stroke="#a0e0b0" stroke-width="1.2"/><path d="M0 10.3 H5" stroke="#1a6a2a" stroke-width="1"/></svg>
<div class="t" style="left:201px;top:362px;height:15px;line-height:15px;color:#111"><span class="sl">mar<span style='letter-spacing:0.9px'>...</span></span></div>
<div class="t" style="left:235px;top:362px;height:15px;line-height:15px;color:#111"><span class="sl">prerouting</span></div>
<div class="a" style="left:137px;top:391px;width:1205px;height:1px;background:#e4e4e4"></div>
<div class="a" style="left:161px;top:377px;width:1px;height:14px;background:#e4e4e4"></div>
<div class="a" style="left:183px;top:377px;width:1px;height:14px;background:#e4e4e4"></div>
<div class="a" style="left:233px;top:377px;width:1px;height:14px;background:#e4e4e4"></div>
<div class="a" style="left:298px;top:377px;width:1px;height:14px;background:#e4e4e4"></div>
<div class="a" style="left:368px;top:377px;width:1px;height:14px;background:#e4e4e4"></div>
<div class="a" style="left:438px;top:377px;width:1px;height:14px;background:#e4e4e4"></div>
<div class="a" style="left:478px;top:377px;width:1px;height:14px;background:#e4e4e4"></div>
<div class="a" style="left:548px;top:377px;width:1px;height:14px;background:#e4e4e4"></div>
<div class="a" style="left:618px;top:377px;width:1px;height:14px;background:#e4e4e4"></div>
<div class="t" style="right:1183px;top:377px;height:15px;line-height:15px;color:#111"><span class="sr">16</span></div>
<svg style="left:188px;top:378px" width="12" height="12"><path d="M1.6 9.6 L3 7.2 L8.6 1.6 L10.8 3.8 L5.2 9.4 L2.4 10.4 Z" fill="#38b050" stroke="#0a3010" stroke-width="0.7"/><path d="M3.2 7.6 L4.6 9" stroke="#a0e0b0" stroke-width="1.2"/><path d="M0 10.3 H5" stroke="#1a6a2a" stroke-width="1"/></svg>
<div class="t" style="left:201px;top:377px;height:15px;line-height:15px;color:#111"><span class="sl">mar<span style='letter-spacing:0.9px'>...</span></span></div>
<div class="t" style="left:235px;top:377px;height:15px;line-height:15px;color:#111"><span class="sl">prerouting</span></div>
<div class="a" style="left:137px;top:406px;width:1205px;height:1px;background:#e4e4e4"></div>
<div class="a" style="left:161px;top:392px;width:1px;height:14px;background:#e4e4e4"></div>
<div class="a" style="left:183px;top:392px;width:1px;height:14px;background:#e4e4e4"></div>
<div class="a" style="left:233px;top:392px;width:1px;height:14px;background:#e4e4e4"></div>
<div class="a" style="left:298px;top:392px;width:1px;height:14px;background:#e4e4e4"></div>
<div class="a" style="left:368px;top:392px;width:1px;height:14px;background:#e4e4e4"></div>
<div class="a" style="left:438px;top:392px;width:1px;height:14px;background:#e4e4e4"></div>
<div class="a" style="left:478px;top:392px;width:1px;height:14px;background:#e4e4e4"></div>
<div class="a" style="left:548px;top:392px;width:1px;height:14px;background:#e4e4e4"></div>
<div class="a" style="left:618px;top:392px;width:1px;height:14px;background:#e4e4e4"></div>
<div class="t" style="right:1183px;top:392px;height:15px;line-height:15px;color:#111"><span class="sr">17</span></div>
<svg style="left:188px;top:393px" width="12" height="12"><path d="M1.6 9.6 L3 7.2 L8.6 1.6 L10.8 3.8 L5.2 9.4 L2.4 10.4 Z" fill="#38b050" stroke="#0a3010" stroke-width="0.7"/><path d="M3.2 7.6 L4.6 9" stroke="#a0e0b0" stroke-width="1.2"/><path d="M0 10.3 H5" stroke="#1a6a2a" stroke-width="1"/></svg>
<div class="t" style="left:201px;top:392px;height:15px;line-height:15px;color:#111"><span class="sl">mar<span style='letter-spacing:0.9px'>...</span></span></div>
<div class="t" style="left:235px;top:392px;height:15px;line-height:15px;color:#111"><span class="sl">prerouting</span></div>
<div class="a" style="left:137px;top:421px;width:1205px;height:1px;background:#e4e4e4"></div>
<div class="a" style="left:161px;top:407px;width:1px;height:14px;background:#e4e4e4"></div>
<div class="a" style="left:183px;top:407px;width:1px;height:14px;background:#e4e4e4"></div>
<div class="a" style="left:233px;top:407px;width:1px;height:14px;background:#e4e4e4"></div>
<div class="a" style="left:298px;top:407px;width:1px;height:14px;background:#e4e4e4"></div>
<div class="a" style="left:368px;top:407px;width:1px;height:14px;background:#e4e4e4"></div>
<div class="a" style="left:438px;top:407px;width:1px;height:14px;background:#e4e4e4"></div>
<div class="a" style="left:478px;top:407px;width:1px;height:14px;background:#e4e4e4"></div>
<div class="a" style="left:548px;top:407px;width:1px;height:14px;background:#e4e4e4"></div>
<div class="a" style="left:618px;top:407px;width:1px;height:14px;background:#e4e4e4"></div>
<div class="t" style="right:1183px;top:407px;height:15px;line-height:15px;color:#111"><span class="sr">18</span></div>
<svg style="left:188px;top:408px" width="12" height="12"><path d="M1.6 9.6 L3 7.2 L8.6 1.6 L10.8 3.8 L5.2 9.4 L2.4 10.4 Z" fill="#38b050" stroke="#0a3010" stroke-width="0.7"/><path d="M3.2 7.6 L4.6 9" stroke="#a0e0b0" stroke-width="1.2"/><path d="M0 10.3 H5" stroke="#1a6a2a" stroke-width="1"/></svg>
<div class="t" style="left:201px;top:407px;height:15px;line-height:15px;color:#111"><span class="sl">mar<span style='letter-spacing:0.9px'>...</span></span></div>
<div class="t" style="left:235px;top:407px;height:15px;line-height:15px;color:#111"><span class="sl">prerouting</span></div>
<div class="a" style="left:137px;top:688px;width:1205px;height:1px;background:#a0a0a0"></div>
<div class="t" style="left:140px;top:689px;height:17px;line-height:17px;color:#111"><span class="sl">19 items</span></div>
<div class="a" style="left:134px;top:706px;width:1208px;height:2px;background:#f8f8f8"></div>
<div class="a" style="left:526px;top:100px;width:794px;height:370px;background:#f0f0f0;border:1px solid #1a1a1a;border-bottom:2px solid #1a1a1a"></div>
<div class="a" style="left:527px;top:123px;width:792px;height:345px;border-right:1px solid #9a9a9a;border-bottom:1px solid #d0d0d0"></div>
<div class="a" style="left:527px;top:101px;width:792px;height:22px;background:#5050c8;border-top:1px solid #8a8ad8"></div>
<div class="t" style="left:532px;top:106px;height:17px;line-height:17px;color:#fff"><span class="sl">Interface List</span></div>
<div class="a" style="left:1283px;top:106px;width:15px;height:14px;background:#ececec;border:1px solid #3040a0"></div>
<div class="a" style="left:1286px;top:109px;width:9px;height:8px;border:1.5px solid #303030;border-top-width:2px"></div>
<div class="a" style="left:1300px;top:106px;width:15px;height:14px;background:#ececec;border:1px solid #3040a0"></div>
<svg style="left:1303px;top:109px" width="9" height="9"><path d="M1 1 L8 8 M8 1 L1 8" stroke="#1a1a1a" stroke-width="2.2"/></svg>
<div class="a" style="left:531px;top:147px;width:785px;height:1px;background:#ffffff"></div>
<div class="a" style="left:532px;top:128px;width:51px;height:19px;background:#d9d9d9;border-right:1px solid #f4f4f4"></div>
<div class="t" style="left:532px;top:130px;height:16px;line-height:16px;width:51px;text-align:center;color:#111"><span class="sc">Interface</span></div>
<div class="a" style="left:583px;top:125px;width:56px;height:23px;background:#f0f0f0;border-left:1px solid #ffffff;border-top:1px solid #ffffff;border-right:1px solid #a0a0a0"></div>
<div class="t" style="left:583px;top:128px;height:16px;line-height:16px;width:55px;text-align:center;color:#111"><span class="sc">Ethernet</span></div>
<div class="a" style="left:638px;top:128px;width:70px;height:19px;background:#d9d9d9;border-right:1px solid #f4f4f4"></div>
<div class="t" style="left:638px;top:130px;height:16px;line-height:16px;width:70px;text-align:center;color:#111"><span class="sc">EoIP Tunnel</span></div>
<div class="a" style="left:708px;top:128px;width:58px;height:19px;background:#d9d9d9;border-right:1px solid #f4f4f4"></div>
<div class="t" style="left:708px;top:130px;height:16px;line-height:16px;width:58px;text-align:center;color:#111"><span class="sc">IP Tunnel</span></div>
<div class="a" style="left:767px;top:128px;width:71px;height:19px;background:#d9d9d9;border-right:1px solid #f4f4f4"></div>
<div class="t" style="left:767px;top:130px;height:16px;line-height:16px;width:71px;text-align:center;color:#111"><span class="sc">GRE Tunnel</span></div>
<div class="a" style="left:838px;top:128px;width:39px;height:19px;background:#d9d9d9;border-right:1px solid #f4f4f4"></div>
<div class="t" style="left:838px;top:130px;height:16px;line-height:16px;width:39px;text-align:center;color:#111"><span class="sc">VLAN</span></div>
<div class="a" style="left:877px;top:128px;width:42px;height:19px;background:#d9d9d9;border-right:1px solid #f4f4f4"></div>
<div class="t" style="left:877px;top:130px;height:16px;line-height:16px;width:42px;text-align:center;color:#111"><span class="sc">VRRP</span></div>
<div class="a" style="left:919px;top:128px;width:51px;height:19px;background:#d9d9d9;border-right:1px solid #f4f4f4"></div>
<div class="t" style="left:919px;top:130px;height:16px;line-height:16px;width:51px;text-align:center;color:#111"><span class="sc">Bonding</span></div>
<div class="a" style="left:970px;top:128px;width:32px;height:19px;background:#d9d9d9;border-right:1px solid #f4f4f4"></div>
<div class="t" style="left:970px;top:130px;height:16px;line-height:16px;width:32px;text-align:center;color:#111"><span class="sc">LTE</span></div>
<div class="b" style="left:531px;top:151px;width:23px;height:23px;"></div>
<div class="b" style="left:557px;top:151px;width:23px;height:23px;"></div>
<div class="b" style="left:589px;top:151px;width:23px;height:23px;"></div>
<div class="b" style="left:621px;top:151px;width:23px;height:23px;"></div>
<div class="b" style="left:653px;top:151px;width:78px;height:23px;"></div>
<svg style="left:535px;top:155px" width="16" height="14"><path d="M2 7 L6 11 L13 3" stroke="#c0c0c0" stroke-width="2.5" fill="none"/><path d="M2 7 L6 11 L13 3" stroke="#f4f4f4" stroke-width="1" fill="none"/></svg>
<svg style="left:562px;top:156px" width="14" height="14"><path d="M2 2 L11 11 M11 2 L2 11" stroke="#c0c0c0" stroke-width="3" fill="none"/><path d="M2 2 L11 11 M11 2 L2 11" stroke="#f4f4f4" stroke-width="1" fill="none"/></svg>
<svg style="left:593px;top:156px" width="16" height="14"><path d="M1.5 5.5 L5.5 1.5 L14.5 1.5 L14.5 11.5 L1.5 11.5 Z M7 5 H12 M7 8 H12" stroke="#909090" stroke-width="1" fill="none"/></svg>
<svg style="left:625px;top:155px" width="16" height="15"><path d="M1 1 H15 L9.5 7 V14 H6.5 V7 Z" fill="#303848"/><path d="M3.5 2.5 H12.5 L8 7 Z" fill="#9aa4b4"/></svg>
<div class="t" style="left:653px;top:155px;height:15px;line-height:15px;width:78px;text-align:center;color:#111"><span class="sc">Power Cycle</span></div>
<div class="a" style="left:1253px;top:153px;width:60px;height:18px;background:#fff;border:1px solid #a8a8a8"></div>
<div class="t" style="left:1258px;top:155px;height:16px;line-height:16px;color:#a0a0a0;font-style:italic"><span class="sl">Find</span></div>
<div class="a" style="left:531px;top:177px;width:782px;height:251px;background:#fff;overflow:hidden">
<div class="a" style="left:0px;top:0px;width:28px;height:18px;background:#f0f0f0;border-left:1px solid #d0d0d0;border-bottom:1px solid #a0a0a0"></div>
<div class="a" style="left:28px;top:0px;width:100px;height:18px;background:#f0f0f0;border-left:1px solid #d0d0d0;border-bottom:1px solid #a0a0a0"></div>
<div class="t" style="left:31px;top:2px;height:16px;line-height:16px;color:#111"><span class="sl">Name</span></div>
<div class="a" style="left:128px;top:0px;width:120px;height:18px;background:#f0f0f0;border-left:1px solid #d0d0d0;border-bottom:1px solid #a0a0a0"></div>
<div class="t" style="left:131px;top:2px;height:16px;line-height:16px;color:#111"><span class="sl">Type</span></div>
<div class="a" style="left:248px;top:0px;width:50px;height:18px;background:#f0f0f0;border-left:1px solid #d0d0d0;border-bottom:1px solid #a0a0a0"></div>
<div class="t" style="left:251px;top:2px;height:16px;line-height:16px;color:#111"><span class="sl">MTU</span></div>
<div class="a" style="left:298px;top:0px;width:50px;height:18px;background:#f0f0f0;border-left:1px solid #d0d0d0;border-bottom:1px solid #a0a0a0"></div>
<div class="t" style="left:301px;top:2px;height:16px;line-height:16px;color:#111"><span class="sl">L2 MTU</span></div>
<div class="a" style="left:348px;top:0px;width:120px;height:18px;background:#f0f0f0;border-left:1px solid #d0d0d0;border-bottom:1px solid #a0a0a0"></div>
<div class="t" style="left:351px;top:2px;height:16px;line-height:16px;color:#111"><span class="sl">Tx</span></div>
<div class="a" style="left:468px;top:0px;width:120px;height:18px;background:#f0f0f0;border-left:1px solid #d0d0d0;border-bottom:1px solid #a0a0a0"></div>
<div class="t" style="left:471px;top:2px;height:16px;line-height:16px;color:#111"><span class="sl">Rx</span></div>
<div class="a" style="left:588px;top:0px;width:100px;height:18px;background:#f0f0f0;border-left:1px solid #d0d0d0;border-bottom:1px solid #a0a0a0"></div>
<div class="t" style="left:591px;top:2px;height:16px;line-height:16px;color:#111"><span class="sl">Tx Packet (p/s)</span></div>
<div class="a" style="left:688px;top:0px;width:78px;height:18px;background:#f0f0f0;border-left:1px solid #d0d0d0;border-bottom:1px solid #a0a0a0"></div>
<div class="t" style="left:691px;top:2px;height:16px;line-height:16px;color:#111"><span class="sl">Rx Packet (p/s)</span></div>
<div class="a" style="left:766px;top:0px;width:16px;height:18px;background:#f0f0f0;border-left:1px solid #d0d0d0;border-bottom:1px solid #a0a0a0"></div>
<div class="a" style="left:0px;top:0px;width:782px;height:1px;background:#a0a0a0"></div>
<svg style="left:1181px;top:6px" width="8" height="6"><path d="M0 0 H7 L3.5 5 Z" fill="#d0d0d0"/></svg>
<svg style="left:769px;top:7px" width="10" height="6"><path d="M0 0 H10 L5 5.5 Z" fill="#111"/></svg>
<svg style="left:118px;top:7px" width="9" height="7"><path d="M4 0.5 L7.8 6.5 H0.5" stroke="#ffffff" stroke-width="1" fill="none"/><path d="M0.5 6.5 L4 0.5" stroke="#7a7a7a" stroke-width="1.1" fill="none"/></svg>
<div class="a" style="left:0px;top:32px;width:782px;height:1px;background:#e4e4e4"></div>
<div class="a" style="left:28px;top:18px;width:1px;height:14px;background:#e4e4e4"></div>
<div class="a" style="left:128px;top:18px;width:1px;height:14px;background:#e4e4e4"></div>
<div class="a" style="left:248px;top:18px;width:1px;height:14px;background:#e4e4e4"></div>
<div class="a" style="left:298px;top:18px;width:1px;height:14px;background:#e4e4e4"></div>
<div class="a" style="left:348px;top:18px;width:1px;height:14px;background:#e4e4e4"></div>
<div class="a" style="left:468px;top:18px;width:1px;height:14px;background:#e4e4e4"></div>
<div class="a" style="left:588px;top:18px;width:1px;height:14px;background:#e4e4e4"></div>
<div class="a" style="left:688px;top:18px;width:1px;height:14px;background:#e4e4e4"></div>
<div class="t" style="left:3px;top:18px;height:15px;line-height:15px;color:#111"><span class="sl">R</span></div>
<svg style="left:32px;top:19px" width="14" height="12"><path d="M0.2 5.4 L3.6 2 L5 3.3 L3.1 5.4 L5 7.5 L3.6 8.8 Z M13.8 5.4 L10.4 2 L9 3.3 L10.9 5.4 L9 7.5 L10.4 8.8 Z" fill="#a01616" stroke="#4a0808" stroke-width="0.6"/><path d="M6 0.2 H8 V3.6 H6 Z M6 4.7 H8 V6 H6 Z M6 7 H8 V10.8 H6 Z" fill="#111"/></svg>
<div class="t" style="left:47px;top:18px;height:15px;line-height:15px;color:#111"><span class="sl">ether1</span></div>
<div class="t" style="left:131px;top:18px;height:15px;line-height:15px;color:#111"><span class="sl">Ethernet</span></div>
<div class="t" style="left:96px;width:200px;text-align:right;top:18px;height:15px;line-height:15px;color:#111"><span class="sr">1500</span></div>
<div class="t" style="left:146px;width:200px;text-align:right;top:18px;height:15px;line-height:15px;color:#111"><span class="sr">1598</span></div>
<div class="t" style="left:266px;width:200px;text-align:right;top:18px;height:15px;line-height:15px;color:#111"><span class="sr">277.9 kbps</span></div>
<div class="t" style="left:386px;width:200px;text-align:right;top:18px;height:15px;line-height:15px;color:#111"><span class="sr">12.5 kbps</span></div>
<div class="t" style="left:486px;width:200px;text-align:right;top:18px;height:15px;line-height:15px;color:#111"><span class="sr">44</span></div>
<div class="t" style="left:586px;width:200px;text-align:right;top:18px;height:15px;line-height:15px;color:#111"><span class="sr">15</span></div>
<div class="a" style="left:0px;top:47px;width:782px;height:1px;background:#e4e4e4"></div>
<div class="a" style="left:28px;top:33px;width:1px;height:14px;background:#e4e4e4"></div>
<div class="a" style="left:128px;top:33px;width:1px;height:14px;background:#e4e4e4"></div>
<div class="a" style="left:248px;top:33px;width:1px;height:14px;background:#e4e4e4"></div>
<div class="a" style="left:298px;top:33px;width:1px;height:14px;background:#e4e4e4"></div>
<div class="a" style="left:348px;top:33px;width:1px;height:14px;background:#e4e4e4"></div>
<div class="a" style="left:468px;top:33px;width:1px;height:14px;background:#e4e4e4"></div>
<div class="a" style="left:588px;top:33px;width:1px;height:14px;background:#e4e4e4"></div>
<div class="a" style="left:688px;top:33px;width:1px;height:14px;background:#e4e4e4"></div>
<div class="t" style="left:3px;top:33px;height:15px;line-height:15px;color:#111"><span class="sl">R</span></div>
<svg style="left:32px;top:34px" width="14" height="12"><path d="M0.2 5.4 L3.6 2 L5 3.3 L3.1 5.4 L5 7.5 L3.6 8.8 Z M13.8 5.4 L10.4 2 L9 3.3 L10.9 5.4 L9 7.5 L10.4 8.8 Z" fill="#a01616" stroke="#4a0808" stroke-width="0.6"/><path d="M6 0.2 H8 V3.6 H6 Z M6 4.7 H8 V6 H6 Z M6 7 H8 V10.8 H6 Z" fill="#111"/></svg>
<div class="t" style="left:47px;top:33px;height:15px;line-height:15px;color:#111"><span class="sl">ether2</span></div>
<div class="t" style="left:131px;top:33px;height:15px;line-height:15px;color:#111"><span class="sl">Ethernet</span></div>
<div class="t" style="left:96px;width:200px;text-align:right;top:33px;height:15px;line-height:15px;color:#111"><span class="sr">1500</span></div>
<div class="t" style="left:146px;width:200px;text-align:right;top:33px;height:15px;line-height:15px;color:#111"><span class="sr">1598</span></div>
<div class="t" style="left:266px;width:200px;text-align:right;top:33px;height:15px;line-height:15px;color:#111"><span class="sr">7.6 kbps</span></div>
<div class="t" style="left:386px;width:200px;text-align:right;top:33px;height:15px;line-height:15px;color:#111"><span class="sr">45.2 kbps</span></div>
<div class="t" style="left:486px;width:200px;text-align:right;top:33px;height:15px;line-height:15px;color:#111"><span class="sr">11</span></div>
<div class="t" style="left:586px;width:200px;text-align:right;top:33px;height:15px;line-height:15px;color:#111"><span class="sr">8</span></div>
<div class="a" style="left:0px;top:62px;width:782px;height:1px;background:#e4e4e4"></div>
<div class="a" style="left:28px;top:48px;width:1px;height:14px;background:#e4e4e4"></div>
<div class="a" style="left:128px;top:48px;width:1px;height:14px;background:#e4e4e4"></div>
<div class="a" style="left:248px;top:48px;width:1px;height:14px;background:#e4e4e4"></div>
<div class="a" style="left:298px;top:48px;width:1px;height:14px;background:#e4e4e4"></div>
<div class="a" style="left:348px;top:48px;width:1px;height:14px;background:#e4e4e4"></div>
<div class="a" style="left:468px;top:48px;width:1px;height:14px;background:#e4e4e4"></div>
<div class="a" style="left:588px;top:48px;width:1px;height:14px;background:#e4e4e4"></div>
<div class="a" style="left:688px;top:48px;width:1px;height:14px;background:#e4e4e4"></div>
<div class="t" style="left:3px;top:48px;height:15px;line-height:15px;color:#111"><span class="sl">R</span></div>
<svg style="left:32px;top:49px" width="14" height="12"><path d="M0.2 5.4 L3.6 2 L5 3.3 L3.1 5.4 L5 7.5 L3.6 8.8 Z M13.8 5.4 L10.4 2 L9 3.3 L10.9 5.4 L9 7.5 L10.4 8.8 Z" fill="#a01616" stroke="#4a0808" stroke-width="0.6"/><path d="M6 0.2 H8 V3.6 H6 Z M6 4.7 H8 V6 H6 Z M6 7 H8 V10.8 H6 Z" fill="#111"/></svg>
<div class="t" style="left:47px;top:48px;height:15px;line-height:15px;color:#111"><span class="sl">ether3</span></div>
<div class="t" style="left:131px;top:48px;height:15px;line-height:15px;color:#111"><span class="sl">Ethernet</span></div>
<div class="t" style="left:96px;width:200px;text-align:right;top:48px;height:15px;line-height:15px;color:#111"><span class="sr">1500</span></div>
<div class="t" style="left:146px;width:200px;text-align:right;top:48px;height:15px;line-height:15px;color:#111"><span class="sr">1598</span></div>
<div class="t" style="left:266px;width:200px;text-align:right;top:48px;height:15px;line-height:15px;color:#111"><span class="sr">18.8 kbps</span></div>
<div class="t" style="left:386px;width:200px;text-align:right;top:48px;height:15px;line-height:15px;color:#111"><span class="sr">405.5 kbps</span></div>
<div class="t" style="left:486px;width:200px;text-align:right;top:48px;height:15px;line-height:15px;color:#111"><span class="sr">28</span></div>
<div class="t" style="left:586px;width:200px;text-align:right;top:48px;height:15px;line-height:15px;color:#111"><span class="sr">65</span></div>
<div class="a" style="left:0px;top:77px;width:782px;height:1px;background:#e4e4e4"></div>
<div class="a" style="left:28px;top:63px;width:1px;height:14px;background:#e4e4e4"></div>
<div class="a" style="left:128px;top:63px;width:1px;height:14px;background:#e4e4e4"></div>
<div class="a" style="left:248px;top:63px;width:1px;height:14px;background:#e4e4e4"></div>
<div class="a" style="left:298px;top:63px;width:1px;height:14px;background:#e4e4e4"></div>
<div class="a" style="left:348px;top:63px;width:1px;height:14px;background:#e4e4e4"></div>
<div class="a" style="left:468px;top:63px;width:1px;height:14px;background:#e4e4e4"></div>
<div class="a" style="left:588px;top:63px;width:1px;height:14px;background:#e4e4e4"></div>
<div class="a" style="left:688px;top:63px;width:1px;height:14px;background:#e4e4e4"></div>
<div class="t" style="left:3px;top:63px;height:15px;line-height:15px;color:#111"><span class="sl">R</span></div>
<svg style="left:32px;top:64px" width="14" height="12"><path d="M0.2 5.4 L3.6 2 L5 3.3 L3.1 5.4 L5 7.5 L3.6 8.8 Z M13.8 5.4 L10.4 2 L9 3.3 L10.9 5.4 L9 7.5 L10.4 8.8 Z" fill="#a01616" stroke="#4a0808" stroke-width="0.6"/><path d="M6 0.2 H8 V3.6 H6 Z M6 4.7 H8 V6 H6 Z M6 7 H8 V10.8 H6 Z" fill="#111"/></svg>
<div class="t" style="left:47px;top:63px;height:15px;line-height:15px;color:#111"><span class="sl">ether4</span></div>
<div class="t" style="left:131px;top:63px;height:15px;line-height:15px;color:#111"><span class="sl">Ethernet</span></div>
<div class="t" style="left:96px;width:200px;text-align:right;top:63px;height:15px;line-height:15px;color:#111"><span class="sr">1500</span></div>
<div class="t" style="left:146px;width:200px;text-align:right;top:63px;height:15px;line-height:15px;color:#111"><span class="sr">1598</span></div>
<div class="t" style="left:266px;width:200px;text-align:right;top:63px;height:15px;line-height:15px;color:#111"><span class="sr">19.4 kbps</span></div>
<div class="t" style="left:386px;width:200px;text-align:right;top:63px;height:15px;line-height:15px;color:#111"><span class="sr">102.0 kbps</span></div>
<div class="t" style="left:486px;width:200px;text-align:right;top:63px;height:15px;line-height:15px;color:#111"><span class="sr">19</span></div>
<div class="t" style="left:586px;width:200px;text-align:right;top:63px;height:15px;line-height:15px;color:#111"><span class="sr">17</span></div>
<div class="a" style="left:0px;top:92px;width:782px;height:1px;background:#e4e4e4"></div>
<div class="a" style="left:28px;top:78px;width:1px;height:14px;background:#e4e4e4"></div>
<div class="a" style="left:128px;top:78px;width:1px;height:14px;background:#e4e4e4"></div>
<div class="a" style="left:248px;top:78px;width:1px;height:14px;background:#e4e4e4"></div>
<div class="a" style="left:298px;top:78px;width:1px;height:14px;background:#e4e4e4"></div>
<div class="a" style="left:348px;top:78px;width:1px;height:14px;background:#e4e4e4"></div>
<div class="a" style="left:468px;top:78px;width:1px;height:14px;background:#e4e4e4"></div>
<div class="a" style="left:588px;top:78px;width:1px;height:14px;background:#e4e4e4"></div>
<div class="a" style="left:688px;top:78px;width:1px;height:14px;background:#e4e4e4"></div>
<div class="t" style="left:3px;top:78px;height:15px;line-height:15px;color:#111"><span class="sl">R</span></div>
<svg style="left:32px;top:79px" width="14" height="12"><path d="M0.2 5.4 L3.6 2 L5 3.3 L3.1 5.4 L5 7.5 L3.6 8.8 Z M13.8 5.4 L10.4 2 L9 3.3 L10.9 5.4 L9 7.5 L10.4 8.8 Z" fill="#a01616" stroke="#4a0808" stroke-width="0.6"/><path d="M6 0.2 H8 V3.6 H6 Z M6 4.7 H8 V6 H6 Z M6 7 H8 V10.8 H6 Z" fill="#111"/></svg>
<div class="t" style="left:47px;top:78px;height:15px;line-height:15px;color:#111"><span class="sl">ether5</span></div>
<div class="t" style="left:131px;top:78px;height:15px;line-height:15px;color:#111"><span class="sl">Ethernet</span></div>
<div class="t" style="left:96px;width:200px;text-align:right;top:78px;height:15px;line-height:15px;color:#111"><span class="sr">1500</span></div>
<div class="t" style="left:146px;width:200px;text-align:right;top:78px;height:15px;line-height:15px;color:#111"><span class="sr">1598</span></div>
<div class="t" style="left:266px;width:200px;text-align:right;top:78px;height:15px;line-height:15px;color:#111"><span class="sr">124.0 kbps</span></div>
<div class="t" style="left:386px;width:200px;text-align:right;top:78px;height:15px;line-height:15px;color:#111"><span class="sr">1288.3 kbps</span></div>
<div class="t" style="left:486px;width:200px;text-align:right;top:78px;height:15px;line-height:15px;color:#111"><span class="sr">92</span></div>
<div class="t" style="left:586px;width:200px;text-align:right;top:78px;height:15px;line-height:15px;color:#111"><span class="sr">172</span></div>
<div class="a" style="left:0px;top:107px;width:782px;height:1px;background:#e4e4e4"></div>
<div class="a" style="left:28px;top:93px;width:1px;height:14px;background:#e4e4e4"></div>
<div class="a" style="left:128px;top:93px;width:1px;height:14px;background:#e4e4e4"></div>
<div class="a" style="left:248px;top:93px;width:1px;height:14px;background:#e4e4e4"></div>
<div class="a" style="left:298px;top:93px;width:1px;height:14px;background:#e4e4e4"></div>
<div class="a" style="left:348px;top:93px;width:1px;height:14px;background:#e4e4e4"></div>
<div class="a" style="left:468px;top:93px;width:1px;height:14px;background:#e4e4e4"></div>
<div class="a" style="left:588px;top:93px;width:1px;height:14px;background:#e4e4e4"></div>
<div class="a" style="left:688px;top:93px;width:1px;height:14px;background:#e4e4e4"></div>
<div class="t" style="left:3px;top:93px;height:15px;line-height:15px;color:#111"><span class="sl">R</span></div>
<svg style="left:32px;top:94px" width="14" height="12"><path d="M0.2 5.4 L3.6 2 L5 3.3 L3.1 5.4 L5 7.5 L3.6 8.8 Z M13.8 5.4 L10.4 2 L9 3.3 L10.9 5.4 L9 7.5 L10.4 8.8 Z" fill="#a01616" stroke="#4a0808" stroke-width="0.6"/><path d="M6 0.2 H8 V3.6 H6 Z M6 4.7 H8 V6 H6 Z M6 7 H8 V10.8 H6 Z" fill="#111"/></svg>
<div class="t" style="left:47px;top:93px;height:15px;line-height:15px;color:#111"><span class="sl">ether6</span></div>
<div class="t" style="left:131px;top:93px;height:15px;line-height:15px;color:#111"><span class="sl">Ethernet</span></div>
<div class="t" style="left:96px;width:200px;text-align:right;top:93px;height:15px;line-height:15px;color:#111"><span class="sr">1500</span></div>
<div class="t" style="left:146px;width:200px;text-align:right;top:93px;height:15px;line-height:15px;color:#111"><span class="sr">1598</span></div>
<div class="t" style="left:266px;width:200px;text-align:right;top:93px;height:15px;line-height:15px;color:#111"><span class="sr">90.0 kbps</span></div>
<div class="t" style="left:386px;width:200px;text-align:right;top:93px;height:15px;line-height:15px;color:#111"><span class="sr">2.1 Mbps</span></div>
<div class="t" style="left:486px;width:200px;text-align:right;top:93px;height:15px;line-height:15px;color:#111"><span class="sr">83</span></div>
<div class="t" style="left:586px;width:200px;text-align:right;top:93px;height:15px;line-height:15px;color:#111"><span class="sr">284</span></div>
<div class="a" style="left:0px;top:122px;width:782px;height:1px;background:#e4e4e4"></div>
<div class="a" style="left:28px;top:108px;width:1px;height:14px;background:#e4e4e4"></div>
<div class="a" style="left:128px;top:108px;width:1px;height:14px;background:#e4e4e4"></div>
<div class="a" style="left:248px;top:108px;width:1px;height:14px;background:#e4e4e4"></div>
<div class="a" style="left:298px;top:108px;width:1px;height:14px;background:#e4e4e4"></div>
<div class="a" style="left:348px;top:108px;width:1px;height:14px;background:#e4e4e4"></div>
<div class="a" style="left:468px;top:108px;width:1px;height:14px;background:#e4e4e4"></div>
<div class="a" style="left:588px;top:108px;width:1px;height:14px;background:#e4e4e4"></div>
<div class="a" style="left:688px;top:108px;width:1px;height:14px;background:#e4e4e4"></div>
<div class="t" style="left:3px;top:108px;height:15px;line-height:15px;color:#111"><span class="sl">R</span></div>
<svg style="left:32px;top:109px" width="14" height="12"><path d="M0.2 5.4 L3.6 2 L5 3.3 L3.1 5.4 L5 7.5 L3.6 8.8 Z M13.8 5.4 L10.4 2 L9 3.3 L10.9 5.4 L9 7.5 L10.4 8.8 Z" fill="#a01616" stroke="#4a0808" stroke-width="0.6"/><path d="M6 0.2 H8 V3.6 H6 Z M6 4.7 H8 V6 H6 Z M6 7 H8 V10.8 H6 Z" fill="#111"/></svg>
<div class="t" style="left:47px;top:108px;height:15px;line-height:15px;color:#111"><span class="sl">ether7</span></div>
<div class="t" style="left:131px;top:108px;height:15px;line-height:15px;color:#111"><span class="sl">Ethernet</span></div>
<div class="t" style="left:96px;width:200px;text-align:right;top:108px;height:15px;line-height:15px;color:#111"><span class="sr">1500</span></div>
<div class="t" style="left:146px;width:200px;text-align:right;top:108px;height:15px;line-height:15px;color:#111"><span class="sr">1598</span></div>
<div class="t" style="left:266px;width:200px;text-align:right;top:108px;height:15px;line-height:15px;color:#111"><span class="sr">14.4 kbps</span></div>
<div class="t" style="left:386px;width:200px;text-align:right;top:108px;height:15px;line-height:15px;color:#111"><span class="sr">16.9 kbps</span></div>
<div class="t" style="left:486px;width:200px;text-align:right;top:108px;height:15px;line-height:15px;color:#111"><span class="sr">16</span></div>
<div class="t" style="left:586px;width:200px;text-align:right;top:108px;height:15px;line-height:15px;color:#111"><span class="sr">10</span></div>
<div class="a" style="left:0px;top:137px;width:782px;height:1px;background:#e4e4e4"></div>
<div class="a" style="left:28px;top:123px;width:1px;height:14px;background:#e4e4e4"></div>
<div class="a" style="left:128px;top:123px;width:1px;height:14px;background:#e4e4e4"></div>
<div class="a" style="left:248px;top:123px;width:1px;height:14px;background:#e4e4e4"></div>
<div class="a" style="left:298px;top:123px;width:1px;height:14px;background:#e4e4e4"></div>
<div class="a" style="left:348px;top:123px;width:1px;height:14px;background:#e4e4e4"></div>
<div class="a" style="left:468px;top:123px;width:1px;height:14px;background:#e4e4e4"></div>
<div class="a" style="left:588px;top:123px;width:1px;height:14px;background:#e4e4e4"></div>
<div class="a" style="left:688px;top:123px;width:1px;height:14px;background:#e4e4e4"></div>
<div class="t" style="left:3px;top:123px;height:15px;line-height:15px;color:#111"><span class="sl">R</span></div>
<svg style="left:32px;top:124px" width="14" height="12"><path d="M0.2 5.4 L3.6 2 L5 3.3 L3.1 5.4 L5 7.5 L3.6 8.8 Z M13.8 5.4 L10.4 2 L9 3.3 L10.9 5.4 L9 7.5 L10.4 8.8 Z" fill="#a01616" stroke="#4a0808" stroke-width="0.6"/><path d="M6 0.2 H8 V3.6 H6 Z M6 4.7 H8 V6 H6 Z M6 7 H8 V10.8 H6 Z" fill="#111"/></svg>
<div class="t" style="left:47px;top:123px;height:15px;line-height:15px;color:#111"><span class="sl">ether8</span></div>
<div class="t" style="left:131px;top:123px;height:15px;line-height:15px;color:#111"><span class="sl">Ethernet</span></div>
<div class="t" style="left:96px;width:200px;text-align:right;top:123px;height:15px;line-height:15px;color:#111"><span class="sr">1500</span></div>
<div class="t" style="left:146px;width:200px;text-align:right;top:123px;height:15px;line-height:15px;color:#111"><span class="sr">1598</span></div>
<div class="t" style="left:266px;width:200px;text-align:right;top:123px;height:15px;line-height:15px;color:#111"><span class="sr">194.7 kbps</span></div>
<div class="t" style="left:386px;width:200px;text-align:right;top:123px;height:15px;line-height:15px;color:#111"><span class="sr">47.6 kbps</span></div>
<div class="t" style="left:486px;width:200px;text-align:right;top:123px;height:15px;line-height:15px;color:#111"><span class="sr">57</span></div>
<div class="t" style="left:586px;width:200px;text-align:right;top:123px;height:15px;line-height:15px;color:#111"><span class="sr">57</span></div>
<div class="a" style="left:0px;top:152px;width:782px;height:1px;background:#e4e4e4"></div>
<div class="a" style="left:28px;top:138px;width:1px;height:14px;background:#e4e4e4"></div>
<div class="a" style="left:128px;top:138px;width:1px;height:14px;background:#e4e4e4"></div>
<div class="a" style="left:248px;top:138px;width:1px;height:14px;background:#e4e4e4"></div>
<div class="a" style="left:298px;top:138px;width:1px;height:14px;background:#e4e4e4"></div>
<div class="a" style="left:348px;top:138px;width:1px;height:14px;background:#e4e4e4"></div>
<div class="a" style="left:468px;top:138px;width:1px;height:14px;background:#e4e4e4"></div>
<div class="a" style="left:588px;top:138px;width:1px;height:14px;background:#e4e4e4"></div>
<div class="a" style="left:688px;top:138px;width:1px;height:14px;background:#e4e4e4"></div>
<div class="t" style="left:3px;top:138px;height:15px;line-height:15px;color:#111"><span class="sl">R</span></div>
<svg style="left:32px;top:139px" width="14" height="12"><path d="M0.2 5.4 L3.6 2 L5 3.3 L3.1 5.4 L5 7.5 L3.6 8.8 Z M13.8 5.4 L10.4 2 L9 3.3 L10.9 5.4 L9 7.5 L10.4 8.8 Z" fill="#a01616" stroke="#4a0808" stroke-width="0.6"/><path d="M6 0.2 H8 V3.6 H6 Z M6 4.7 H8 V6 H6 Z M6 7 H8 V10.8 H6 Z" fill="#111"/></svg>
<div class="t" style="left:47px;top:138px;height:15px;line-height:15px;color:#111"><span class="sl">ether9</span></div>
<div class="t" style="left:131px;top:138px;height:15px;line-height:15px;color:#111"><span class="sl">Ethernet</span></div>
<div class="t" style="left:96px;width:200px;text-align:right;top:138px;height:15px;line-height:15px;color:#111"><span class="sr">1500</span></div>
<div class="t" style="left:146px;width:200px;text-align:right;top:138px;height:15px;line-height:15px;color:#111"><span class="sr">1598</span></div>
<div class="t" style="left:266px;width:200px;text-align:right;top:138px;height:15px;line-height:15px;color:#111"><span class="sr">172.2 kbps</span></div>
<div class="t" style="left:386px;width:200px;text-align:right;top:138px;height:15px;line-height:15px;color:#111"><span class="sr">1865.4 kbps</span></div>
<div class="t" style="left:486px;width:200px;text-align:right;top:138px;height:15px;line-height:15px;color:#111"><span class="sr">98</span></div>
<div class="t" style="left:586px;width:200px;text-align:right;top:138px;height:15px;line-height:15px;color:#111"><span class="sr">172</span></div>
<div class="a" style="left:0px;top:167px;width:782px;height:1px;background:#e4e4e4"></div>
<div class="a" style="left:28px;top:153px;width:1px;height:14px;background:#e4e4e4"></div>
<div class="a" style="left:128px;top:153px;width:1px;height:14px;background:#e4e4e4"></div>
<div class="a" style="left:248px;top:153px;width:1px;height:14px;background:#e4e4e4"></div>
<div class="a" style="left:298px;top:153px;width:1px;height:14px;background:#e4e4e4"></div>
<div class="a" style="left:348px;top:153px;width:1px;height:14px;background:#e4e4e4"></div>
<div class="a" style="left:468px;top:153px;width:1px;height:14px;background:#e4e4e4"></div>
<div class="a" style="left:588px;top:153px;width:1px;height:14px;background:#e4e4e4"></div>
<div class="a" style="left:688px;top:153px;width:1px;height:14px;background:#e4e4e4"></div>
<div class="t" style="left:3px;top:153px;height:15px;line-height:15px;color:#111"><span class="sl"></span></div>
<svg style="left:32px;top:154px" width="14" height="12"><path d="M0.2 5.4 L3.6 2 L5 3.3 L3.1 5.4 L5 7.5 L3.6 8.8 Z M13.8 5.4 L10.4 2 L9 3.3 L10.9 5.4 L9 7.5 L10.4 8.8 Z" fill="#a01616" stroke="#4a0808" stroke-width="0.6"/><path d="M6 0.2 H8 V3.6 H6 Z M6 4.7 H8 V6 H6 Z M6 7 H8 V10.8 H6 Z" fill="#111"/></svg>
<div class="t" style="left:47px;top:153px;height:15px;line-height:15px;color:#111"><span class="sl">ether10</span></div>
<div class="t" style="left:131px;top:153px;height:15px;line-height:15px;color:#111"><span class="sl">Ethernet</span></div>
<div class="t" style="left:96px;width:200px;text-align:right;top:153px;height:15px;line-height:15px;color:#111"><span class="sr">1500</span></div>
<div class="t" style="left:146px;width:200px;text-align:right;top:153px;height:15px;line-height:15px;color:#111"><span class="sr">1598</span></div>
<div class="t" style="left:266px;width:200px;text-align:right;top:153px;height:15px;line-height:15px;color:#111"><span class="sr">0 bps</span></div>
<div class="t" style="left:386px;width:200px;text-align:right;top:153px;height:15px;line-height:15px;color:#111"><span class="sr">0 bps</span></div>
<div class="t" style="left:486px;width:200px;text-align:right;top:153px;height:15px;line-height:15px;color:#111"><span class="sr">0</span></div>
<div class="t" style="left:586px;width:200px;text-align:right;top:153px;height:15px;line-height:15px;color:#111"><span class="sr">0</span></div>
<div class="a" style="left:0px;top:182px;width:782px;height:1px;background:#e4e4e4"></div>
<div class="a" style="left:28px;top:168px;width:1px;height:14px;background:#e4e4e4"></div>
<div class="a" style="left:128px;top:168px;width:1px;height:14px;background:#e4e4e4"></div>
<div class="a" style="left:248px;top:168px;width:1px;height:14px;background:#e4e4e4"></div>
<div class="a" style="left:298px;top:168px;width:1px;height:14px;background:#e4e4e4"></div>
<div class="a" style="left:348px;top:168px;width:1px;height:14px;background:#e4e4e4"></div>
<div class="a" style="left:468px;top:168px;width:1px;height:14px;background:#e4e4e4"></div>
<div class="a" style="left:588px;top:168px;width:1px;height:14px;background:#e4e4e4"></div>
<div class="a" style="left:688px;top:168px;width:1px;height:14px;background:#e4e4e4"></div>
<div class="t" style="left:3px;top:168px;height:15px;line-height:15px;color:#111"><span class="sl"></span></div>
<svg style="left:32px;top:169px" width="14" height="12"><path d="M0.2 5.4 L3.6 2 L5 3.3 L3.1 5.4 L5 7.5 L3.6 8.8 Z M13.8 5.4 L10.4 2 L9 3.3 L10.9 5.4 L9 7.5 L10.4 8.8 Z" fill="#a01616" stroke="#4a0808" stroke-width="0.6"/><path d="M6 0.2 H8 V3.6 H6 Z M6 4.7 H8 V6 H6 Z M6 7 H8 V10.8 H6 Z" fill="#111"/></svg>
<div class="t" style="left:47px;top:168px;height:15px;line-height:15px;color:#111"><span class="sl">ether11</span></div>
<div class="t" style="left:131px;top:168px;height:15px;line-height:15px;color:#111"><span class="sl">Ethernet</span></div>
<div class="t" style="left:96px;width:200px;text-align:right;top:168px;height:15px;line-height:15px;color:#111"><span class="sr">1500</span></div>
<div class="t" style="left:146px;width:200px;text-align:right;top:168px;height:15px;line-height:15px;color:#111"><span class="sr">1600</span></div>
<div class="t" style="left:266px;width:200px;text-align:right;top:168px;height:15px;line-height:15px;color:#111"><span class="sr">0 bps</span></div>
<div class="t" style="left:386px;width:200px;text-align:right;top:168px;height:15px;line-height:15px;color:#111"><span class="sr">0 bps</span></div>
<div class="t" style="left:486px;width:200px;text-align:right;top:168px;height:15px;line-height:15px;color:#111"><span class="sr">0</span></div>
<div class="t" style="left:586px;width:200px;text-align:right;top:168px;height:15px;line-height:15px;color:#111"><span class="sr">0</span></div>
<div class="a" style="left:0px;top:197px;width:782px;height:1px;background:#e4e4e4"></div>
<div class="a" style="left:28px;top:183px;width:1px;height:14px;background:#e4e4e4"></div>
<div class="a" style="left:128px;top:183px;width:1px;height:14px;background:#e4e4e4"></div>
<div class="a" style="left:248px;top:183px;width:1px;height:14px;background:#e4e4e4"></div>
<div class="a" style="left:298px;top:183px;width:1px;height:14px;background:#e4e4e4"></div>
<div class="a" style="left:348px;top:183px;width:1px;height:14px;background:#e4e4e4"></div>
<div class="a" style="left:468px;top:183px;width:1px;height:14px;background:#e4e4e4"></div>
<div class="a" style="left:588px;top:183px;width:1px;height:14px;background:#e4e4e4"></div>
<div class="a" style="left:688px;top:183px;width:1px;height:14px;background:#e4e4e4"></div>
<div class="t" style="left:3px;top:183px;height:15px;line-height:15px;color:#111"><span class="sl"></span></div>
<svg style="left:32px;top:184px" width="14" height="12"><path d="M0.2 5.4 L3.6 2 L5 3.3 L3.1 5.4 L5 7.5 L3.6 8.8 Z M13.8 5.4 L10.4 2 L9 3.3 L10.9 5.4 L9 7.5 L10.4 8.8 Z" fill="#a01616" stroke="#4a0808" stroke-width="0.6"/><path d="M6 0.2 H8 V3.6 H6 Z M6 4.7 H8 V6 H6 Z M6 7 H8 V10.8 H6 Z" fill="#111"/></svg>
<div class="t" style="left:47px;top:183px;height:15px;line-height:15px;color:#111"><span class="sl">ether12</span></div>
<div class="t" style="left:131px;top:183px;height:15px;line-height:15px;color:#111"><span class="sl">Ethernet</span></div>
<div class="t" style="left:96px;width:200px;text-align:right;top:183px;height:15px;line-height:15px;color:#111"><span class="sr">1500</span></div>
<div class="t" style="left:146px;width:200px;text-align:right;top:183px;height:15px;line-height:15px;color:#111"><span class="sr">1600</span></div>
<div class="t" style="left:266px;width:200px;text-align:right;top:183px;height:15px;line-height:15px;color:#111"><span class="sr">0 bps</span></div>
<div class="t" style="left:386px;width:200px;text-align:right;top:183px;height:15px;line-height:15px;color:#111"><span class="sr">0 bps</span></div>
<div class="t" style="left:486px;width:200px;text-align:right;top:183px;height:15px;line-height:15px;color:#111"><span class="sr">0</span></div>
<div class="t" style="left:586px;width:200px;text-align:right;top:183px;height:15px;line-height:15px;color:#111"><span class="sr">0</span></div>
<div class="a" style="left:0px;top:212px;width:782px;height:1px;background:#e4e4e4"></div>
<div class="t" style="left:17px;top:198px;height:15px;line-height:15px;color:#333"><span class="sl">:::</span></div>
<div class="t" style="left:29px;top:198px;height:15px;line-height:15px;color:#111;--sx:0.895"><span class="sl">SAIDA PARA REDE LOCAL</span></div>
<div class="a" style="left:0px;top:227px;width:782px;height:1px;background:#e4e4e4"></div>
<div class="a" style="left:28px;top:213px;width:1px;height:14px;background:#e4e4e4"></div>
<div class="a" style="left:128px;top:213px;width:1px;height:14px;background:#e4e4e4"></div>
<div class="a" style="left:248px;top:213px;width:1px;height:14px;background:#e4e4e4"></div>
<div class="a" style="left:298px;top:213px;width:1px;height:14px;background:#e4e4e4"></div>
<div class="a" style="left:348px;top:213px;width:1px;height:14px;background:#e4e4e4"></div>
<div class="a" style="left:468px;top:213px;width:1px;height:14px;background:#e4e4e4"></div>
<div class="a" style="left:588px;top:213px;width:1px;height:14px;background:#e4e4e4"></div>
<div class="a" style="left:688px;top:213px;width:1px;height:14px;background:#e4e4e4"></div>
<div class="t" style="left:3px;top:213px;height:15px;line-height:15px;color:#111"><span class="sl">R</span></div>
<svg style="left:32px;top:214px" width="14" height="12"><path d="M0.2 5.4 L3.6 2 L5 3.3 L3.1 5.4 L5 7.5 L3.6 8.8 Z M13.8 5.4 L10.4 2 L9 3.3 L10.9 5.4 L9 7.5 L10.4 8.8 Z" fill="#a01616" stroke="#4a0808" stroke-width="0.6"/><path d="M6 0.2 H8 V3.6 H6 Z M6 4.7 H8 V6 H6 Z M6 7 H8 V10.8 H6 Z" fill="#111"/></svg>
<div class="t" style="left:47px;top:213px;height:15px;line-height:15px;color:#111"><span class="sl">ether13</span></div>
<div class="t" style="left:131px;top:213px;height:15px;line-height:15px;color:#111"><span class="sl">Ethernet</span></div>
<div class="t" style="left:96px;width:200px;text-align:right;top:213px;height:15px;line-height:15px;color:#111"><span class="sr">1500</span></div>
<div class="t" style="left:146px;width:200px;text-align:right;top:213px;height:15px;line-height:15px;color:#111"><span class="sr">1600</span></div>
<div class="t" style="left:266px;width:200px;text-align:right;top:213px;height:15px;line-height:15px;color:#111"><span class="sr">5.4 Mbps</span></div>
<div class="t" style="left:386px;width:200px;text-align:right;top:213px;height:15px;line-height:15px;color:#111"><span class="sr">762.4 kbps</span></div>
<div class="t" style="left:486px;width:200px;text-align:right;top:213px;height:15px;line-height:15px;color:#111"><span class="sr">593</span></div>
<div class="t" style="left:586px;width:200px;text-align:right;top:213px;height:15px;line-height:15px;color:#111"><span class="sr">470</span></div>
</div>
<div class="a" style="left:1313px;top:177px;width:3px;height:251px;background:#f0f0f0;border-left:1px solid #b8b8b8"></div>
<div class="a" style="left:532px;top:208px;width:781px;height:1px;background:repeating-linear-gradient(90deg,#606060 0 1px,#ffffff 1px 2px)"></div>
<div class="a" style="left:531px;top:428px;width:783px;height:17px;background:#f0f0f0;border-top:1px solid #a0a0a0;border-bottom:1px solid #a8a8a8"></div>
<div class="a" style="left:531px;top:429px;width:17px;height:15px;background:#f0f0f0;border-right:1px solid #a8a8a8"></div>
<svg style="left:536px;top:433px" width="8" height="8"><path d="M0 4 L4 0 V2.5 H7.5 V5.5 H4 V8 Z" fill="#111"/></svg>
<div class="a" style="left:1016px;top:429px;width:282px;height:15px;background:#d6d6d6;border-left:1px solid #c4c4c4;border-right:1px solid #a8a8a8"></div>
<svg style="left:1302px;top:433px" width="8" height="8"><path d="M8 4 L4 0 V2.5 H0.5 V5.5 H4 V8 Z" fill="#111"/></svg>
<div class="a" style="left:531px;top:428px;width:1px;height:36px;background:#a8a8a8"></div>
<div class="a" style="left:1313px;top:177px;width:1px;height:268px;background:#b0b0b0"></div>
<div class="a" style="left:529px;top:464px;width:788px;height:2px;border-top:1px solid #b4b4b4;border-bottom:1px solid #f8f8f8"></div>
<div class="a" style="left:1315px;top:148px;width:2px;height:318px;border-left:1px solid #b4b4b4;border-right:1px solid #f8f8f8"></div>
<div class="t" style="left:534px;top:446px;height:17px;line-height:17px;color:#111"><span class="sl">13 items out of 22</span></div>
